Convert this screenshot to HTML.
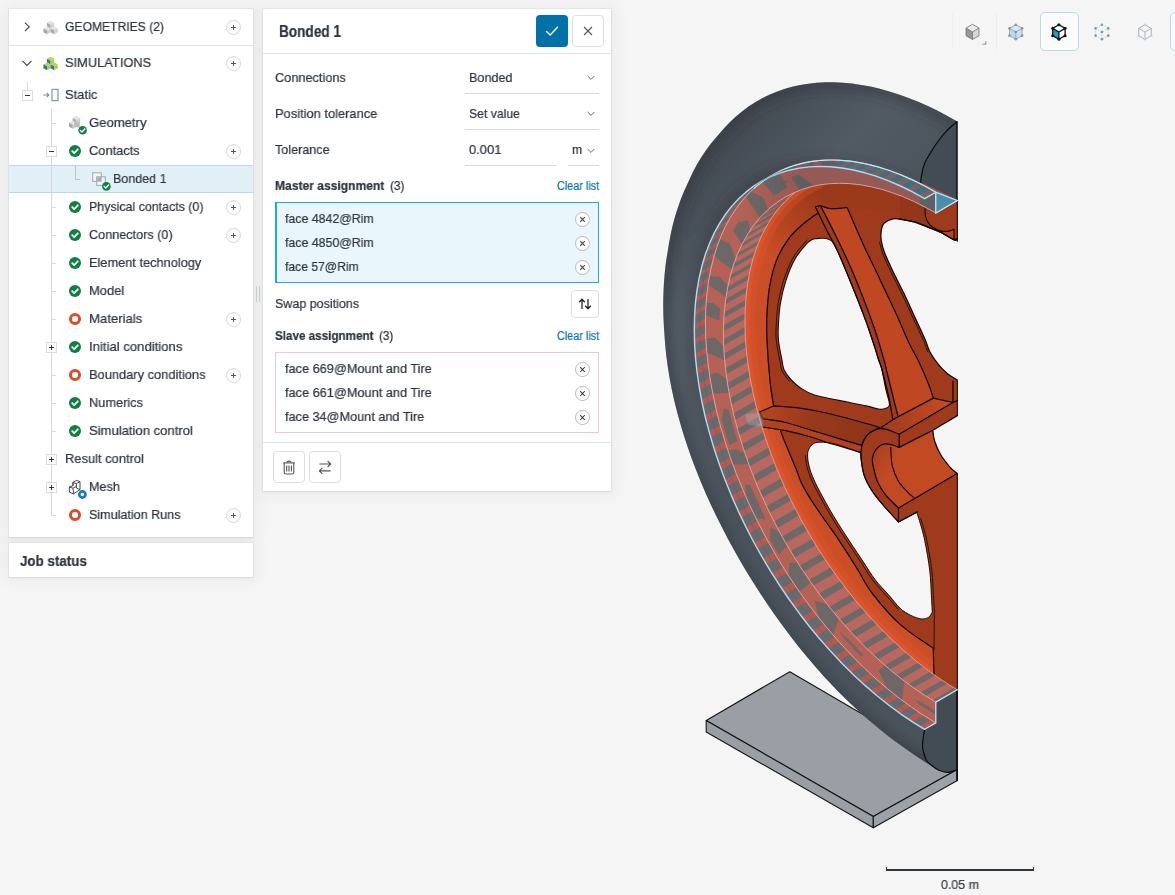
<!DOCTYPE html>
<html lang="en">
<head>
<meta charset="utf-8">
<title>SimScale Workbench - Bonded 1</title>
<style>
html,body{margin:0;padding:0;}
body{width:1175px;height:895px;overflow:hidden;background:#f5f5f5;font-family:"Liberation Sans",sans-serif;position:relative;}
.t{position:absolute;white-space:pre;line-height:1;transform-origin:0 50%;display:block;will-change:transform;-webkit-text-stroke:0.22px currentColor;}
.abs{position:absolute;}
.card{position:absolute;background:#fff;}
.sh{position:absolute;background:#fff;box-shadow:0 0 0 1px rgba(0,0,0,0.035),0 0 16px 4px rgba(0,0,0,0.045),0 1px 2px rgba(0,0,0,0.06);}
.plus{position:absolute;width:13px;height:13px;border:1px solid #d6d6d6;border-radius:50%;background:#fff;}
.plus:before{content:"";position:absolute;left:4px;top:6px;width:5px;height:1px;background:#555;}
.plus:after{content:"";position:absolute;left:6px;top:4px;width:1px;height:5px;background:#555;}
.ok{position:absolute;width:12px;height:12px;border-radius:50%;background:#0f8042;}
.ok svg{position:absolute;left:0;top:0;}
.ring{position:absolute;width:5.6px;height:5.6px;border:3px solid #dc4d2c;border-radius:50%;}
.exp{position:absolute;width:9px;height:9px;border:1px solid #dcdcdc;background:#fff;}
.exp:before{content:"";position:absolute;left:2px;top:4px;width:5px;height:1px;background:#333;}
.exp.p:after{content:"";position:absolute;left:4px;top:2px;width:1px;height:5px;background:#333;}
.hl{position:absolute;height:1px;background:#dadada;}
.vl{position:absolute;width:1px;background:#dadada;}
.btn{position:absolute;width:30px;height:30px;border:1px solid #dedede;border-radius:4px;background:#fff;}
.xc{position:absolute;width:13px;height:13px;border:1px solid #b9b9b9;border-radius:50%;background:#fff;}
.xc svg{position:absolute;left:0;top:0;}
.ul{position:absolute;height:1px;background:#d9d9d9;}
</style>
</head>
<body>
<div class="sh" style="left:9px;top:9px;width:244px;height:528px;"></div>
<div class="sh" style="left:9px;top:543px;width:244px;height:34px;"></div>
<div class="sh" style="left:263px;top:9px;width:348px;height:482px;"></div>
<svg class="abs" style="left:0;top:0" width="1175" height="895" viewBox="0 0 1175 895">
<defs>
<linearGradient id="gt" gradientUnits="userSpaceOnUse" x1="680" y1="120" x2="900" y2="330"><stop offset="0" stop-color="#3b424a"/><stop offset="0.45" stop-color="#525a63"/><stop offset="1" stop-color="#444c54"/></linearGradient>
<pattern id="stripes" patternUnits="userSpaceOnUse" width="40" height="19" patternTransform="rotate(-28)"><rect x="0" y="0" width="40" height="8" fill="#6b6a6c"/></pattern>
</defs>
<polygon points="706.2,720.5 789.8,671.7 957.3,769.5 873.3,816.4" fill="#9a9fa5" stroke="#141414" stroke-width="1.1" stroke-linejoin="round"/>
<polygon points="706.2,720.5 873.3,816.4 873.3,827.8 706.2,732.0" fill="#9a9fa6" stroke="#141414" stroke-width="1.1" stroke-linejoin="round"/>
<polygon points="873.3,816.4 957.3,769.5 957.3,780.6 873.3,827.8" fill="#9da2a8" stroke="#141414" stroke-width="1.1" stroke-linejoin="round"/>
<clipPath id="ctire"><polygon points="672.7,225.2 670.6,234.7 670.6,234.7 670.6,234.7 668.8,244.4 668.8,244.4 667.3,253.9 667.3,253.9 665.8,263.6 665.8,263.6 665.8,263.6 664.7,273.6 664.7,273.6 664.7,273.6 663.9,283.8 663.9,283.8 663.9,283.8 663.4,294.3 663.4,294.3 663.4,294.3 663.2,304.9 663.2,304.9 663.2,304.9 663.4,315.7 663.4,315.7 663.4,315.7 663.9,326.7 663.9,326.7 663.9,326.7 664.7,337.9 664.7,337.9 664.7,337.9 665.1,343.9 665.1,343.9 666.2,355.0 666.2,355.0 666.2,355.0 667.7,366.2 667.7,366.2 667.7,366.2 669.5,377.5 669.5,377.5 669.5,377.5 671.7,388.9 671.7,388.9 671.7,388.9 674.2,400.4 674.2,400.4 674.2,400.4 677.1,411.9 677.1,411.9 677.1,411.9 680.3,423.5 680.3,423.5 680.3,423.5 683.8,435.2 683.8,435.2 683.8,435.2 687.6,446.8 687.6,446.8 687.6,446.8 691.7,458.5 691.7,458.5 691.7,458.5 696.1,470.1 696.1,470.1 696.1,470.1 700.8,481.7 700.8,481.7 700.8,481.7 705.7,493.3 705.7,493.3 705.7,493.3 710.9,504.8 710.9,504.8 710.9,504.8 716.4,516.2 716.4,516.2 716.4,516.2 722.1,527.6 722.1,527.6 722.1,527.6 728.0,538.9 728.0,538.9 728.0,538.9 734.1,550.1 734.1,550.1 734.1,550.1 740.4,561.2 740.4,561.2 740.4,561.2 746.9,572.2 746.9,572.2 746.9,572.2 753.6,583.0 753.6,583.0 753.6,583.0 760.5,593.8 760.5,593.8 760.5,593.8 767.5,604.3 767.5,604.3 767.5,604.3 774.7,614.8 774.7,614.8 774.7,614.8 782.1,625.0 782.1,625.0 782.1,625.0 789.6,635.1 789.6,635.1 790.9,636.8 790.9,636.8 798.8,647.0 798.8,647.0 798.8,647.0 806.9,656.8 806.9,656.8 806.9,656.8 815.2,666.5 815.2,666.5 815.2,666.5 823.5,675.9 823.5,675.9 823.5,675.9 832.0,685.0 832.0,685.0 832.0,685.0 840.7,693.9 840.7,693.9 840.7,693.9 849.4,702.4 849.4,702.4 849.4,702.4 858.2,710.7 858.2,710.7 858.2,710.7 867.2,718.7 867.2,718.7 867.2,718.7 876.2,726.3 876.2,726.3 876.2,726.3 885.2,733.7 885.2,733.7 885.2,733.7 894.4,740.7 894.4,740.7 894.4,740.7 903.5,747.3 903.5,747.3 910.2,751.9 910.2,751.9 919.7,758.4 919.7,758.4 919.7,758.4 929.2,764.6 929.2,764.6 929.2,764.6 938.7,770.3 938.7,770.3 938.7,770.3 938.7,770.3 938.7,770.3 938.7,770.3 938.7,770.3 938.7,770.3 938.7,770.3 938.7,770.3 938.7,770.3 938.7,770.3 938.7,770.3 938.7,770.3 938.7,770.3 938.7,770.3 938.7,770.3 938.7,770.3 938.7,770.3 947.7,772.4 947.7,772.4 947.7,772.4 947.7,772.4 947.7,772.4 947.7,772.4 947.7,772.4 947.7,772.4 947.7,772.4 947.7,772.4 947.7,772.4 947.7,772.4 947.7,772.4 947.7,772.4 947.8,772.4 947.8,772.4 947.8,772.4 947.8,772.4 947.8,772.4 947.8,772.4 947.8,772.4 947.8,772.4 947.8,772.4 947.8,772.4 947.8,772.4 947.8,772.4 947.8,772.4 947.8,772.4 947.8,772.4 947.8,772.4 947.8,772.4 957.3,769.5 957.3,769.5 957.3,769.5 957.3,769.5 957.3,769.5 957.3,769.5 957.3,769.5 957.3,769.5 957.3,769.5 957.3,769.5 957.3,769.5 957.3,769.5 957.3,769.5 957.3,769.5 957.3,769.5 957.3,769.5 957.3,769.5 957.3,769.5 957.3,769.5 957.3,769.5 957.3,769.5 957.3,769.5 957.3,769.5 957.3,769.5 957.3,769.5 957.3,769.5 957.3,769.5 957.3,769.5 957.3,769.5 957.3,769.5 957.3,769.5 957.3,769.5 957.3,769.5 957.3,769.5 957.3,769.5 957.3,769.5 957.3,769.5 957.3,769.5 957.3,769.5 957.3,769.5 957.3,769.5 957.3,769.5 957.3,769.5 957.3,769.5 957.3,769.5 957.3,769.5 957.3,769.5 957.3,769.5 957.3,769.5 957.3,769.5 957.3,689.7 957.3,689.7 957.3,689.7 957.3,689.7 957.3,689.7 957.3,689.7 957.3,689.7 957.3,689.7 957.3,689.7 957.3,689.7 957.3,689.7 957.3,689.7 957.3,689.7 957.3,689.7 957.3,689.7 957.3,689.7 957.2,689.7 957.2,689.7 957.2,689.7 957.2,689.7 957.2,689.7 957.2,689.7 935.7,702.1 935.7,702.1 935.7,702.1 935.7,702.1 935.7,702.1 935.7,702.1 935.7,702.1 935.7,702.1 935.7,702.1 935.7,702.1 935.7,702.1 935.7,702.1 935.7,722.9 924.6,729.2 916.6,724.3 908.6,719.2 900.6,713.7 892.6,707.9 884.6,701.8 876.8,695.4 868.9,688.8 861.2,681.8 853.5,674.7 845.9,667.2 838.4,659.5 831.0,651.6 823.7,643.4 816.5,635.0 809.5,626.4 802.6,617.6 795.9,608.6 789.3,599.5 782.9,590.2 776.6,580.7 770.6,571.1 764.7,561.3 759.0,551.5 753.5,541.5 748.2,531.4 743.2,521.3 738.3,511.0 733.7,500.8 729.4,490.4 725.2,480.1 721.3,469.7 717.7,459.3 714.3,449.0 711.1,438.6 708.3,428.3 705.6,418.0 703.3,407.8 701.2,397.6 699.4,387.5 697.9,377.5 696.6,367.7 695.6,357.9 694.9,348.3 694.5,338.8 694.4,329.4 694.5,320.3 694.9,311.3 695.6,302.4 696.6,293.8 697.9,285.4 699.4,277.2 701.2,269.3 703.3,261.5 705.6,254.0 708.3,246.8 711.1,239.9 714.3,233.2 717.7,226.8 721.3,220.7 725.2,214.8 729.4,209.3 733.7,204.1 738.3,199.2 743.2,194.6 748.2,190.4 753.5,186.5 759.0,182.9 764.7,179.7 770.5,176.8 776.6,174.3 782.8,172.1 789.3,170.3 795.8,168.8 802.6,167.7 809.5,167.0 816.5,166.6 823.7,166.6 830.9,166.9 838.3,167.6 845.8,168.7 853.4,170.1 861.1,171.9 868.9,174.0 876.7,176.5 884.6,179.4 892.5,182.5 900.5,186.1 908.5,189.9 916.5,194.2 924.6,198.7 924.6,198.7 924.6,198.7 924.6,198.7 924.6,198.7 924.6,198.7 924.6,198.7 924.6,198.7 924.6,198.7 924.6,198.7 924.6,198.7 924.6,198.7 924.6,198.7 924.6,198.7 924.6,198.7 924.6,198.7 924.6,198.7 924.6,198.7 924.6,198.7 924.6,198.7 924.6,198.7 924.6,198.7 924.6,198.7 924.6,198.7 924.6,198.7 924.6,198.7 924.6,198.7 924.6,198.7 924.6,198.7 924.6,198.7 924.6,198.7 924.6,198.7 924.6,198.7 924.6,198.7 924.6,198.7 924.6,198.7 924.6,198.7 924.6,198.7 924.6,198.7 924.6,198.7 924.6,198.7 924.6,198.7 924.6,198.7 935.8,192.2 957.2,200.5 957.2,200.5 957.2,200.5 957.2,200.5 957.3,200.5 957.3,200.5 957.3,200.5 957.3,200.5 957.3,200.5 957.3,200.5 957.3,200.5 957.3,200.5 957.3,200.5 957.3,200.5 957.3,200.5 957.3,200.5 957.3,200.5 957.3,200.5 957.3,200.5 957.3,200.5 957.3,200.5 957.3,121.5 957.3,121.5 957.3,121.5 957.3,121.5 957.3,121.5 957.3,121.5 957.3,121.5 957.3,121.5 957.3,121.5 957.3,121.5 957.3,121.5 957.3,121.5 957.3,121.5 957.3,121.5 957.3,121.5 957.3,121.5 957.3,121.5 957.3,121.5 957.3,121.5 957.3,121.5 957.3,121.5 957.3,121.5 957.3,121.5 957.3,121.5 957.3,121.5 957.3,121.5 957.3,121.5 957.3,121.5 957.3,121.5 957.3,121.5 957.3,121.5 957.3,121.5 957.3,121.5 957.3,121.5 957.3,121.5 957.3,121.5 957.3,121.5 957.3,121.5 957.3,121.5 957.3,121.5 957.3,121.5 957.3,121.5 957.3,121.5 947.5,115.9 947.5,115.9 947.5,115.9 937.7,110.8 937.7,110.8 937.7,110.8 927.9,106.1 927.9,106.1 927.9,106.1 918.2,101.8 918.2,101.8 918.2,101.8 908.5,97.9 908.5,97.9 908.5,97.9 898.9,94.4 898.9,94.4 898.9,94.4 889.3,91.4 889.3,91.4 889.3,91.4 879.8,88.8 879.8,88.8 879.8,88.8 870.5,86.6 870.5,86.6 870.5,86.6 861.2,84.9 861.2,84.9 861.2,84.9 852.0,83.6 852.0,83.6 852.0,83.6 843.0,82.7 843.0,82.7 843.0,82.7 834.1,82.3 834.1,82.3 834.1,82.3 825.4,82.3 825.4,82.3 825.4,82.3 816.8,82.8 816.8,82.8 816.8,82.8 808.4,83.7 808.4,83.7 808.4,83.7 800.2,85.0 800.2,85.0 800.2,85.0 792.1,86.8 792.1,86.8 792.1,86.8 784.3,89.0 784.3,89.0 784.3,89.0 776.7,91.7 776.7,91.7 776.7,91.7 769.3,94.8 769.3,94.8 769.3,94.8 762.1,98.3 762.1,98.3 762.1,98.3 755.2,102.2 755.2,102.2 755.2,102.2 748.5,106.6 748.5,106.6 748.5,106.6 742.0,111.4 742.0,111.4 742.0,111.4 735.9,116.5 735.9,116.5 735.9,116.6 730.0,122.1 730.0,122.1 730.0,122.1 724.3,128.1 724.3,128.1 716.3,137.2 716.3,137.2 711.0,143.5 711.0,143.5 711.0,143.5 706.0,150.2 706.0,150.2 706.0,150.2 701.3,157.2 701.3,157.2 701.3,157.2 696.9,164.6 696.9,164.6 696.9,164.6 692.8,172.3 692.8,172.3 692.8,172.3 689.0,180.4 689.0,180.4 684.5,190.3 684.5,190.3 681.1,198.6 681.1,198.6 681.1,198.6 678.0,207.2 678.0,207.2 678.0,207.2 675.2,216.1 675.2,216.1 675.2,216.1 672.7,225.2 672.7,225.2 672.7,225.2"/></clipPath>
<polygon points="672.7,225.2 670.6,234.7 670.6,234.7 670.6,234.7 668.8,244.4 668.8,244.4 667.3,253.9 667.3,253.9 665.8,263.6 665.8,263.6 665.8,263.6 664.7,273.6 664.7,273.6 664.7,273.6 663.9,283.8 663.9,283.8 663.9,283.8 663.4,294.3 663.4,294.3 663.4,294.3 663.2,304.9 663.2,304.9 663.2,304.9 663.4,315.7 663.4,315.7 663.4,315.7 663.9,326.7 663.9,326.7 663.9,326.7 664.7,337.9 664.7,337.9 664.7,337.9 665.1,343.9 665.1,343.9 666.2,355.0 666.2,355.0 666.2,355.0 667.7,366.2 667.7,366.2 667.7,366.2 669.5,377.5 669.5,377.5 669.5,377.5 671.7,388.9 671.7,388.9 671.7,388.9 674.2,400.4 674.2,400.4 674.2,400.4 677.1,411.9 677.1,411.9 677.1,411.9 680.3,423.5 680.3,423.5 680.3,423.5 683.8,435.2 683.8,435.2 683.8,435.2 687.6,446.8 687.6,446.8 687.6,446.8 691.7,458.5 691.7,458.5 691.7,458.5 696.1,470.1 696.1,470.1 696.1,470.1 700.8,481.7 700.8,481.7 700.8,481.7 705.7,493.3 705.7,493.3 705.7,493.3 710.9,504.8 710.9,504.8 710.9,504.8 716.4,516.2 716.4,516.2 716.4,516.2 722.1,527.6 722.1,527.6 722.1,527.6 728.0,538.9 728.0,538.9 728.0,538.9 734.1,550.1 734.1,550.1 734.1,550.1 740.4,561.2 740.4,561.2 740.4,561.2 746.9,572.2 746.9,572.2 746.9,572.2 753.6,583.0 753.6,583.0 753.6,583.0 760.5,593.8 760.5,593.8 760.5,593.8 767.5,604.3 767.5,604.3 767.5,604.3 774.7,614.8 774.7,614.8 774.7,614.8 782.1,625.0 782.1,625.0 782.1,625.0 789.6,635.1 789.6,635.1 790.9,636.8 790.9,636.8 798.8,647.0 798.8,647.0 798.8,647.0 806.9,656.8 806.9,656.8 806.9,656.8 815.2,666.5 815.2,666.5 815.2,666.5 823.5,675.9 823.5,675.9 823.5,675.9 832.0,685.0 832.0,685.0 832.0,685.0 840.7,693.9 840.7,693.9 840.7,693.9 849.4,702.4 849.4,702.4 849.4,702.4 858.2,710.7 858.2,710.7 858.2,710.7 867.2,718.7 867.2,718.7 867.2,718.7 876.2,726.3 876.2,726.3 876.2,726.3 885.2,733.7 885.2,733.7 885.2,733.7 894.4,740.7 894.4,740.7 894.4,740.7 903.5,747.3 903.5,747.3 910.2,751.9 910.2,751.9 919.7,758.4 919.7,758.4 919.7,758.4 929.2,764.6 929.2,764.6 929.2,764.6 938.7,770.3 938.7,770.3 938.7,770.3 938.7,770.3 938.7,770.3 938.7,770.3 938.7,770.3 938.7,770.3 938.7,770.3 938.7,770.3 938.7,770.3 938.7,770.3 938.7,770.3 938.7,770.3 938.7,770.3 938.7,770.3 938.7,770.3 938.7,770.3 938.7,770.3 947.7,772.4 947.7,772.4 947.7,772.4 947.7,772.4 947.7,772.4 947.7,772.4 947.7,772.4 947.7,772.4 947.7,772.4 947.7,772.4 947.7,772.4 947.7,772.4 947.7,772.4 947.7,772.4 947.8,772.4 947.8,772.4 947.8,772.4 947.8,772.4 947.8,772.4 947.8,772.4 947.8,772.4 947.8,772.4 947.8,772.4 947.8,772.4 947.8,772.4 947.8,772.4 947.8,772.4 947.8,772.4 947.8,772.4 947.8,772.4 947.8,772.4 957.3,769.5 957.3,769.5 957.3,769.5 957.3,769.5 957.3,769.5 957.3,769.5 957.3,769.5 957.3,769.5 957.3,769.5 957.3,769.5 957.3,769.5 957.3,769.5 957.3,769.5 957.3,769.5 957.3,769.5 957.3,769.5 957.3,769.5 957.3,769.5 957.3,769.5 957.3,769.5 957.3,769.5 957.3,769.5 957.3,769.5 957.3,769.5 957.3,769.5 957.3,769.5 957.3,769.5 957.3,769.5 957.3,769.5 957.3,769.5 957.3,769.5 957.3,769.5 957.3,769.5 957.3,769.5 957.3,769.5 957.3,769.5 957.3,769.5 957.3,769.5 957.3,769.5 957.3,769.5 957.3,769.5 957.3,769.5 957.3,769.5 957.3,769.5 957.3,769.5 957.3,769.5 957.3,769.5 957.3,769.5 957.3,769.5 957.3,769.5 957.3,689.7 957.3,689.7 957.3,689.7 957.3,689.7 957.3,689.7 957.3,689.7 957.3,689.7 957.3,689.7 957.3,689.7 957.3,689.7 957.3,689.7 957.3,689.7 957.3,689.7 957.3,689.7 957.3,689.7 957.3,689.7 957.2,689.7 957.2,689.7 957.2,689.7 957.2,689.7 957.2,689.7 957.2,689.7 935.7,702.1 935.7,702.1 935.7,702.1 935.7,702.1 935.7,702.1 935.7,702.1 935.7,702.1 935.7,702.1 935.7,702.1 935.7,702.1 935.7,702.1 935.7,702.1 935.7,722.9 924.6,729.2 916.6,724.3 908.6,719.2 900.6,713.7 892.6,707.9 884.6,701.8 876.8,695.4 868.9,688.8 861.2,681.8 853.5,674.7 845.9,667.2 838.4,659.5 831.0,651.6 823.7,643.4 816.5,635.0 809.5,626.4 802.6,617.6 795.9,608.6 789.3,599.5 782.9,590.2 776.6,580.7 770.6,571.1 764.7,561.3 759.0,551.5 753.5,541.5 748.2,531.4 743.2,521.3 738.3,511.0 733.7,500.8 729.4,490.4 725.2,480.1 721.3,469.7 717.7,459.3 714.3,449.0 711.1,438.6 708.3,428.3 705.6,418.0 703.3,407.8 701.2,397.6 699.4,387.5 697.9,377.5 696.6,367.7 695.6,357.9 694.9,348.3 694.5,338.8 694.4,329.4 694.5,320.3 694.9,311.3 695.6,302.4 696.6,293.8 697.9,285.4 699.4,277.2 701.2,269.3 703.3,261.5 705.6,254.0 708.3,246.8 711.1,239.9 714.3,233.2 717.7,226.8 721.3,220.7 725.2,214.8 729.4,209.3 733.7,204.1 738.3,199.2 743.2,194.6 748.2,190.4 753.5,186.5 759.0,182.9 764.7,179.7 770.5,176.8 776.6,174.3 782.8,172.1 789.3,170.3 795.8,168.8 802.6,167.7 809.5,167.0 816.5,166.6 823.7,166.6 830.9,166.9 838.3,167.6 845.8,168.7 853.4,170.1 861.1,171.9 868.9,174.0 876.7,176.5 884.6,179.4 892.5,182.5 900.5,186.1 908.5,189.9 916.5,194.2 924.6,198.7 924.6,198.7 924.6,198.7 924.6,198.7 924.6,198.7 924.6,198.7 924.6,198.7 924.6,198.7 924.6,198.7 924.6,198.7 924.6,198.7 924.6,198.7 924.6,198.7 924.6,198.7 924.6,198.7 924.6,198.7 924.6,198.7 924.6,198.7 924.6,198.7 924.6,198.7 924.6,198.7 924.6,198.7 924.6,198.7 924.6,198.7 924.6,198.7 924.6,198.7 924.6,198.7 924.6,198.7 924.6,198.7 924.6,198.7 924.6,198.7 924.6,198.7 924.6,198.7 924.6,198.7 924.6,198.7 924.6,198.7 924.6,198.7 924.6,198.7 924.6,198.7 924.6,198.7 924.6,198.7 924.6,198.7 924.6,198.7 935.8,192.2 957.2,200.5 957.2,200.5 957.2,200.5 957.2,200.5 957.3,200.5 957.3,200.5 957.3,200.5 957.3,200.5 957.3,200.5 957.3,200.5 957.3,200.5 957.3,200.5 957.3,200.5 957.3,200.5 957.3,200.5 957.3,200.5 957.3,200.5 957.3,200.5 957.3,200.5 957.3,200.5 957.3,200.5 957.3,121.5 957.3,121.5 957.3,121.5 957.3,121.5 957.3,121.5 957.3,121.5 957.3,121.5 957.3,121.5 957.3,121.5 957.3,121.5 957.3,121.5 957.3,121.5 957.3,121.5 957.3,121.5 957.3,121.5 957.3,121.5 957.3,121.5 957.3,121.5 957.3,121.5 957.3,121.5 957.3,121.5 957.3,121.5 957.3,121.5 957.3,121.5 957.3,121.5 957.3,121.5 957.3,121.5 957.3,121.5 957.3,121.5 957.3,121.5 957.3,121.5 957.3,121.5 957.3,121.5 957.3,121.5 957.3,121.5 957.3,121.5 957.3,121.5 957.3,121.5 957.3,121.5 957.3,121.5 957.3,121.5 957.3,121.5 957.3,121.5 947.5,115.9 947.5,115.9 947.5,115.9 937.7,110.8 937.7,110.8 937.7,110.8 927.9,106.1 927.9,106.1 927.9,106.1 918.2,101.8 918.2,101.8 918.2,101.8 908.5,97.9 908.5,97.9 908.5,97.9 898.9,94.4 898.9,94.4 898.9,94.4 889.3,91.4 889.3,91.4 889.3,91.4 879.8,88.8 879.8,88.8 879.8,88.8 870.5,86.6 870.5,86.6 870.5,86.6 861.2,84.9 861.2,84.9 861.2,84.9 852.0,83.6 852.0,83.6 852.0,83.6 843.0,82.7 843.0,82.7 843.0,82.7 834.1,82.3 834.1,82.3 834.1,82.3 825.4,82.3 825.4,82.3 825.4,82.3 816.8,82.8 816.8,82.8 816.8,82.8 808.4,83.7 808.4,83.7 808.4,83.7 800.2,85.0 800.2,85.0 800.2,85.0 792.1,86.8 792.1,86.8 792.1,86.8 784.3,89.0 784.3,89.0 784.3,89.0 776.7,91.7 776.7,91.7 776.7,91.7 769.3,94.8 769.3,94.8 769.3,94.8 762.1,98.3 762.1,98.3 762.1,98.3 755.2,102.2 755.2,102.2 755.2,102.2 748.5,106.6 748.5,106.6 748.5,106.6 742.0,111.4 742.0,111.4 742.0,111.4 735.9,116.5 735.9,116.5 735.9,116.6 730.0,122.1 730.0,122.1 730.0,122.1 724.3,128.1 724.3,128.1 716.3,137.2 716.3,137.2 711.0,143.5 711.0,143.5 711.0,143.5 706.0,150.2 706.0,150.2 706.0,150.2 701.3,157.2 701.3,157.2 701.3,157.2 696.9,164.6 696.9,164.6 696.9,164.6 692.8,172.3 692.8,172.3 692.8,172.3 689.0,180.4 689.0,180.4 684.5,190.3 684.5,190.3 681.1,198.6 681.1,198.6 681.1,198.6 678.0,207.2 678.0,207.2 678.0,207.2 675.2,216.1 675.2,216.1 675.2,216.1 672.7,225.2 672.7,225.2 672.7,225.2" fill="url(#gt)" stroke="none" stroke-width="0" />
<filter id="bl" x="-10%" y="-10%" width="120%" height="120%"><feGaussianBlur stdDeviation="4"/></filter>
<g clip-path="url(#ctire)"><g filter="url(#bl)">
<polyline points="672.7,225.2 670.6,234.7 670.6,234.7 670.6,234.7 668.8,244.4 668.8,244.4 667.3,253.9 667.3,253.9 665.8,263.6 665.8,263.6 665.8,263.6 664.7,273.6 664.7,273.6 664.7,273.6 663.9,283.8 663.9,283.8 663.9,283.8 663.4,294.3 663.4,294.3 663.4,294.3 663.2,304.9 663.2,304.9 663.2,304.9 663.4,315.7 663.4,315.7 663.4,315.7 663.9,326.7 663.9,326.7 663.9,326.7 664.7,337.9 664.7,337.9 664.7,337.9 665.1,343.9 665.1,343.9 666.2,355.0 666.2,355.0 666.2,355.0 667.7,366.2 667.7,366.2 667.7,366.2 669.5,377.5 669.5,377.5 669.5,377.5 671.7,388.9 671.7,388.9 671.7,388.9 674.2,400.4 674.2,400.4 674.2,400.4 677.1,411.9 677.1,411.9 677.1,411.9 680.3,423.5 680.3,423.5 680.3,423.5 683.8,435.2 683.8,435.2 683.8,435.2 687.6,446.8 687.6,446.8 687.6,446.8 691.7,458.5 691.7,458.5 691.7,458.5 696.1,470.1 696.1,470.1 696.1,470.1 700.8,481.7 700.8,481.7 700.8,481.7 705.7,493.3 705.7,493.3 705.7,493.3 710.9,504.8 710.9,504.8 710.9,504.8 716.4,516.2 716.4,516.2 716.4,516.2 722.1,527.6 722.1,527.6 722.1,527.6 728.0,538.9 728.0,538.9 728.0,538.9 734.1,550.1 734.1,550.1 734.1,550.1 740.4,561.2 740.4,561.2 740.4,561.2 746.9,572.2 746.9,572.2 746.9,572.2 753.6,583.0 753.6,583.0 753.6,583.0 760.5,593.8 760.5,593.8 760.5,593.8 767.5,604.3 767.5,604.3 767.5,604.3 774.7,614.8 774.7,614.8 774.7,614.8 782.1,625.0 782.1,625.0 782.1,625.0 789.6,635.1 789.6,635.1 790.9,636.8 790.9,636.8 798.8,647.0 798.8,647.0 798.8,647.0 806.9,656.8 806.9,656.8 806.9,656.8 815.2,666.5 815.2,666.5 815.2,666.5 823.5,675.9 823.5,675.9 823.5,675.9 832.0,685.0 832.0,685.0 832.0,685.0 840.7,693.9 840.7,693.9 840.7,693.9 849.4,702.4 849.4,702.4 849.4,702.4 858.2,710.7 858.2,710.7 858.2,710.7 867.2,718.7 867.2,718.7 867.2,718.7 876.2,726.3 876.2,726.3 876.2,726.3 885.2,733.7 885.2,733.7 885.2,733.7 894.4,740.7 894.4,740.7 894.4,740.7 903.5,747.3 903.5,747.3 910.2,751.9 910.2,751.9 919.7,758.4 919.7,758.4 919.7,758.4 929.2,764.6 929.2,764.6 929.2,764.6 938.7,770.3 938.7,770.3 938.7,770.3 938.7,770.3 938.7,770.3 938.7,770.3 938.7,770.3 938.7,770.3 938.7,770.3 938.7,770.3 938.7,770.3 938.7,770.3 938.7,770.3 938.7,770.3 938.7,770.3 938.7,770.3 938.7,770.3 938.7,770.3 938.7,770.3 947.7,772.4 947.7,772.4 947.7,772.4 947.7,772.4 947.7,772.4 947.7,772.4 947.7,772.4 947.7,772.4 947.7,772.4 947.7,772.4 947.7,772.4 947.7,772.4 947.7,772.4 947.7,772.4 947.8,772.4 947.8,772.4 947.8,772.4 947.8,772.4 947.8,772.4 947.8,772.4 947.8,772.4 947.8,772.4 947.8,772.4 947.8,772.4 947.8,772.4 947.8,772.4 947.8,772.4 947.8,772.4 947.8,772.4 947.8,772.4 947.8,772.4 957.3,769.5 957.3,769.5 957.3,769.5 957.3,769.5 957.3,769.5 957.3,769.5 957.3,769.5 957.3,769.5 957.3,769.5 957.3,769.5 957.3,769.5 957.3,769.5 957.3,769.5 957.3,769.5 957.3,769.5 957.3,769.5 957.3,769.5 957.3,769.5 957.3,769.5 957.3,769.5 957.3,769.5 957.3,769.5 957.3,769.5 957.3,769.5 957.3,769.5 957.3,769.5 957.3,769.5 957.3,769.5 957.3,769.5 957.3,769.5 957.3,769.5 957.3,769.5 957.3,769.5 957.3,769.5 957.3,769.5 957.3,769.5 957.3,769.5 957.3,769.5 957.3,769.5 957.3,769.5 957.3,769.5 957.3,769.5 957.3,769.5 957.3,769.5 957.3,769.5 957.3,769.5 957.3,769.5 957.3,769.5 957.3,769.5 957.3,769.5 957.3,689.7 957.3,689.7 957.3,689.7 957.3,689.7 957.3,689.7 957.3,689.7 957.3,689.7 957.3,689.7 957.3,689.7 957.3,689.7 957.3,689.7 957.3,689.7 957.3,689.7 957.3,689.7 957.3,689.7 957.3,689.7 957.2,689.7 957.2,689.7 957.2,689.7 957.2,689.7 957.2,689.7 957.2,689.7 935.7,702.1 935.7,702.1 935.7,702.1 935.7,702.1 935.7,702.1 935.7,702.1 935.7,702.1 935.7,702.1 935.7,702.1 935.7,702.1 935.7,702.1 935.7,702.1 935.7,722.9 924.6,729.2 916.6,724.3 908.6,719.2 900.6,713.7 892.6,707.9 884.6,701.8 876.8,695.4 868.9,688.8 861.2,681.8 853.5,674.7 845.9,667.2 838.4,659.5 831.0,651.6 823.7,643.4 816.5,635.0 809.5,626.4 802.6,617.6 795.9,608.6 789.3,599.5 782.9,590.2 776.6,580.7 770.6,571.1 764.7,561.3 759.0,551.5 753.5,541.5 748.2,531.4 743.2,521.3 738.3,511.0 733.7,500.8 729.4,490.4 725.2,480.1 721.3,469.7 717.7,459.3 714.3,449.0 711.1,438.6 708.3,428.3 705.6,418.0 703.3,407.8 701.2,397.6 699.4,387.5 697.9,377.5 696.6,367.7 695.6,357.9 694.9,348.3 694.5,338.8 694.4,329.4 694.5,320.3 694.9,311.3 695.6,302.4 696.6,293.8 697.9,285.4 699.4,277.2 701.2,269.3 703.3,261.5 705.6,254.0 708.3,246.8 711.1,239.9 714.3,233.2 717.7,226.8 721.3,220.7 725.2,214.8 729.4,209.3 733.7,204.1 738.3,199.2 743.2,194.6 748.2,190.4 753.5,186.5 759.0,182.9 764.7,179.7 770.5,176.8 776.6,174.3 782.8,172.1 789.3,170.3 795.8,168.8 802.6,167.7 809.5,167.0 816.5,166.6 823.7,166.6 830.9,166.9 838.3,167.6 845.8,168.7 853.4,170.1 861.1,171.9 868.9,174.0 876.7,176.5 884.6,179.4 892.5,182.5 900.5,186.1 908.5,189.9 916.5,194.2 924.6,198.7 924.6,198.7 924.6,198.7 924.6,198.7 924.6,198.7 924.6,198.7 924.6,198.7 924.6,198.7 924.6,198.7 924.6,198.7 924.6,198.7 924.6,198.7 924.6,198.7 924.6,198.7 924.6,198.7 924.6,198.7 924.6,198.7 924.6,198.7 924.6,198.7 924.6,198.7 924.6,198.7 924.6,198.7 924.6,198.7 924.6,198.7 924.6,198.7 924.6,198.7 924.6,198.7 924.6,198.7 924.6,198.7 924.6,198.7 924.6,198.7 924.6,198.7 924.6,198.7 924.6,198.7 924.6,198.7 924.6,198.7 924.6,198.7 924.6,198.7 924.6,198.7 924.6,198.7 924.6,198.7 924.6,198.7 924.6,198.7 935.8,192.2 957.2,200.5 957.2,200.5 957.2,200.5 957.2,200.5 957.3,200.5 957.3,200.5 957.3,200.5 957.3,200.5 957.3,200.5 957.3,200.5 957.3,200.5 957.3,200.5 957.3,200.5 957.3,200.5 957.3,200.5 957.3,200.5 957.3,200.5 957.3,200.5 957.3,200.5 957.3,200.5 957.3,200.5 957.3,121.5 957.3,121.5 957.3,121.5 957.3,121.5 957.3,121.5 957.3,121.5 957.3,121.5 957.3,121.5 957.3,121.5 957.3,121.5 957.3,121.5 957.3,121.5 957.3,121.5 957.3,121.5 957.3,121.5 957.3,121.5 957.3,121.5 957.3,121.5 957.3,121.5 957.3,121.5 957.3,121.5 957.3,121.5 957.3,121.5 957.3,121.5 957.3,121.5 957.3,121.5 957.3,121.5 957.3,121.5 957.3,121.5 957.3,121.5 957.3,121.5 957.3,121.5 957.3,121.5 957.3,121.5 957.3,121.5 957.3,121.5 957.3,121.5 957.3,121.5 957.3,121.5 957.3,121.5 957.3,121.5 957.3,121.5 957.3,121.5 947.5,115.9 947.5,115.9 947.5,115.9 937.7,110.8 937.7,110.8 937.7,110.8 927.9,106.1 927.9,106.1 927.9,106.1 918.2,101.8 918.2,101.8 918.2,101.8 908.5,97.9 908.5,97.9 908.5,97.9 898.9,94.4 898.9,94.4 898.9,94.4 889.3,91.4 889.3,91.4 889.3,91.4 879.8,88.8 879.8,88.8 879.8,88.8 870.5,86.6 870.5,86.6 870.5,86.6 861.2,84.9 861.2,84.9 861.2,84.9 852.0,83.6 852.0,83.6 852.0,83.6 843.0,82.7 843.0,82.7 843.0,82.7 834.1,82.3 834.1,82.3 834.1,82.3 825.4,82.3 825.4,82.3 825.4,82.3 816.8,82.8 816.8,82.8 816.8,82.8 808.4,83.7 808.4,83.7 808.4,83.7 800.2,85.0 800.2,85.0 800.2,85.0 792.1,86.8 792.1,86.8 792.1,86.8 784.3,89.0 784.3,89.0 784.3,89.0 776.7,91.7 776.7,91.7 776.7,91.7 769.3,94.8 769.3,94.8 769.3,94.8 762.1,98.3 762.1,98.3 762.1,98.3 755.2,102.2 755.2,102.2 755.2,102.2 748.5,106.6 748.5,106.6 748.5,106.6 742.0,111.4 742.0,111.4 742.0,111.4 735.9,116.5 735.9,116.5 735.9,116.6 730.0,122.1 730.0,122.1 730.0,122.1 724.3,128.1 724.3,128.1 716.3,137.2 716.3,137.2 711.0,143.5 711.0,143.5 711.0,143.5 706.0,150.2 706.0,150.2 706.0,150.2 701.3,157.2 701.3,157.2 701.3,157.2 696.9,164.6 696.9,164.6 696.9,164.6 692.8,172.3 692.8,172.3 692.8,172.3 689.0,180.4 689.0,180.4 684.5,190.3 684.5,190.3 681.1,198.6 681.1,198.6 681.1,198.6 678.0,207.2 678.0,207.2 678.0,207.2 675.2,216.1 675.2,216.1 675.2,216.1 672.7,225.2 672.7,225.2 672.7,225.2 672.7,225.2" fill="none" stroke="#2c333a" stroke-width="22" stroke-linejoin="round" stroke-linecap="round" stroke-opacity="0.22"/>
<polyline points="672.7,225.2 670.6,234.7 670.6,234.7 670.6,234.7 668.8,244.4 668.8,244.4 667.3,253.9 667.3,253.9 665.8,263.6 665.8,263.6 665.8,263.6 664.7,273.6 664.7,273.6 664.7,273.6 663.9,283.8 663.9,283.8 663.9,283.8 663.4,294.3 663.4,294.3 663.4,294.3 663.2,304.9 663.2,304.9 663.2,304.9 663.4,315.7 663.4,315.7 663.4,315.7 663.9,326.7 663.9,326.7 663.9,326.7 664.7,337.9 664.7,337.9 664.7,337.9 665.1,343.9 665.1,343.9 666.2,355.0 666.2,355.0 666.2,355.0 667.7,366.2 667.7,366.2 667.7,366.2 669.5,377.5 669.5,377.5 669.5,377.5 671.7,388.9 671.7,388.9 671.7,388.9 674.2,400.4 674.2,400.4 674.2,400.4 677.1,411.9 677.1,411.9 677.1,411.9 680.3,423.5 680.3,423.5 680.3,423.5 683.8,435.2 683.8,435.2 683.8,435.2 687.6,446.8 687.6,446.8 687.6,446.8 691.7,458.5 691.7,458.5 691.7,458.5 696.1,470.1 696.1,470.1 696.1,470.1 700.8,481.7 700.8,481.7 700.8,481.7 705.7,493.3 705.7,493.3 705.7,493.3 710.9,504.8 710.9,504.8 710.9,504.8 716.4,516.2 716.4,516.2 716.4,516.2 722.1,527.6 722.1,527.6 722.1,527.6 728.0,538.9 728.0,538.9 728.0,538.9 734.1,550.1 734.1,550.1 734.1,550.1 740.4,561.2 740.4,561.2 740.4,561.2 746.9,572.2 746.9,572.2 746.9,572.2 753.6,583.0 753.6,583.0 753.6,583.0 760.5,593.8 760.5,593.8 760.5,593.8 767.5,604.3 767.5,604.3 767.5,604.3 774.7,614.8 774.7,614.8 774.7,614.8 782.1,625.0 782.1,625.0 782.1,625.0 789.6,635.1 789.6,635.1 790.9,636.8 790.9,636.8 798.8,647.0 798.8,647.0 798.8,647.0 806.9,656.8 806.9,656.8 806.9,656.8 815.2,666.5 815.2,666.5 815.2,666.5 823.5,675.9 823.5,675.9 823.5,675.9 832.0,685.0 832.0,685.0 832.0,685.0 840.7,693.9 840.7,693.9 840.7,693.9 849.4,702.4 849.4,702.4 849.4,702.4 858.2,710.7 858.2,710.7 858.2,710.7 867.2,718.7 867.2,718.7 867.2,718.7 876.2,726.3 876.2,726.3 876.2,726.3 885.2,733.7 885.2,733.7 885.2,733.7 894.4,740.7 894.4,740.7 894.4,740.7 903.5,747.3 903.5,747.3 910.2,751.9 910.2,751.9 919.7,758.4 919.7,758.4 919.7,758.4 929.2,764.6 929.2,764.6 929.2,764.6 938.7,770.3 938.7,770.3 938.7,770.3 938.7,770.3 938.7,770.3 938.7,770.3 938.7,770.3 938.7,770.3 938.7,770.3 938.7,770.3 938.7,770.3 938.7,770.3 938.7,770.3 938.7,770.3 938.7,770.3 938.7,770.3 938.7,770.3 938.7,770.3 938.7,770.3 947.7,772.4 947.7,772.4 947.7,772.4 947.7,772.4 947.7,772.4 947.7,772.4 947.7,772.4 947.7,772.4 947.7,772.4 947.7,772.4 947.7,772.4 947.7,772.4 947.7,772.4 947.7,772.4 947.8,772.4 947.8,772.4 947.8,772.4 947.8,772.4 947.8,772.4 947.8,772.4 947.8,772.4 947.8,772.4 947.8,772.4 947.8,772.4 947.8,772.4 947.8,772.4 947.8,772.4 947.8,772.4 947.8,772.4 947.8,772.4 947.8,772.4 957.3,769.5 957.3,769.5 957.3,769.5 957.3,769.5 957.3,769.5 957.3,769.5 957.3,769.5 957.3,769.5 957.3,769.5 957.3,769.5 957.3,769.5 957.3,769.5 957.3,769.5 957.3,769.5 957.3,769.5 957.3,769.5 957.3,769.5 957.3,769.5 957.3,769.5 957.3,769.5 957.3,769.5 957.3,769.5 957.3,769.5 957.3,769.5 957.3,769.5 957.3,769.5 957.3,769.5 957.3,769.5 957.3,769.5 957.3,769.5 957.3,769.5 957.3,769.5 957.3,769.5 957.3,769.5 957.3,769.5 957.3,769.5 957.3,769.5 957.3,769.5 957.3,769.5 957.3,769.5 957.3,769.5 957.3,769.5 957.3,769.5 957.3,769.5 957.3,769.5 957.3,769.5 957.3,769.5 957.3,769.5 957.3,769.5 957.3,769.5 957.3,689.7 957.3,689.7 957.3,689.7 957.3,689.7 957.3,689.7 957.3,689.7 957.3,689.7 957.3,689.7 957.3,689.7 957.3,689.7 957.3,689.7 957.3,689.7 957.3,689.7 957.3,689.7 957.3,689.7 957.3,689.7 957.2,689.7 957.2,689.7 957.2,689.7 957.2,689.7 957.2,689.7 957.2,689.7 935.7,702.1 935.7,702.1 935.7,702.1 935.7,702.1 935.7,702.1 935.7,702.1 935.7,702.1 935.7,702.1 935.7,702.1 935.7,702.1 935.7,702.1 935.7,702.1 935.7,722.9 924.6,729.2 916.6,724.3 908.6,719.2 900.6,713.7 892.6,707.9 884.6,701.8 876.8,695.4 868.9,688.8 861.2,681.8 853.5,674.7 845.9,667.2 838.4,659.5 831.0,651.6 823.7,643.4 816.5,635.0 809.5,626.4 802.6,617.6 795.9,608.6 789.3,599.5 782.9,590.2 776.6,580.7 770.6,571.1 764.7,561.3 759.0,551.5 753.5,541.5 748.2,531.4 743.2,521.3 738.3,511.0 733.7,500.8 729.4,490.4 725.2,480.1 721.3,469.7 717.7,459.3 714.3,449.0 711.1,438.6 708.3,428.3 705.6,418.0 703.3,407.8 701.2,397.6 699.4,387.5 697.9,377.5 696.6,367.7 695.6,357.9 694.9,348.3 694.5,338.8 694.4,329.4 694.5,320.3 694.9,311.3 695.6,302.4 696.6,293.8 697.9,285.4 699.4,277.2 701.2,269.3 703.3,261.5 705.6,254.0 708.3,246.8 711.1,239.9 714.3,233.2 717.7,226.8 721.3,220.7 725.2,214.8 729.4,209.3 733.7,204.1 738.3,199.2 743.2,194.6 748.2,190.4 753.5,186.5 759.0,182.9 764.7,179.7 770.5,176.8 776.6,174.3 782.8,172.1 789.3,170.3 795.8,168.8 802.6,167.7 809.5,167.0 816.5,166.6 823.7,166.6 830.9,166.9 838.3,167.6 845.8,168.7 853.4,170.1 861.1,171.9 868.9,174.0 876.7,176.5 884.6,179.4 892.5,182.5 900.5,186.1 908.5,189.9 916.5,194.2 924.6,198.7 924.6,198.7 924.6,198.7 924.6,198.7 924.6,198.7 924.6,198.7 924.6,198.7 924.6,198.7 924.6,198.7 924.6,198.7 924.6,198.7 924.6,198.7 924.6,198.7 924.6,198.7 924.6,198.7 924.6,198.7 924.6,198.7 924.6,198.7 924.6,198.7 924.6,198.7 924.6,198.7 924.6,198.7 924.6,198.7 924.6,198.7 924.6,198.7 924.6,198.7 924.6,198.7 924.6,198.7 924.6,198.7 924.6,198.7 924.6,198.7 924.6,198.7 924.6,198.7 924.6,198.7 924.6,198.7 924.6,198.7 924.6,198.7 924.6,198.7 924.6,198.7 924.6,198.7 924.6,198.7 924.6,198.7 924.6,198.7 935.8,192.2 957.2,200.5 957.2,200.5 957.2,200.5 957.2,200.5 957.3,200.5 957.3,200.5 957.3,200.5 957.3,200.5 957.3,200.5 957.3,200.5 957.3,200.5 957.3,200.5 957.3,200.5 957.3,200.5 957.3,200.5 957.3,200.5 957.3,200.5 957.3,200.5 957.3,200.5 957.3,200.5 957.3,200.5 957.3,121.5 957.3,121.5 957.3,121.5 957.3,121.5 957.3,121.5 957.3,121.5 957.3,121.5 957.3,121.5 957.3,121.5 957.3,121.5 957.3,121.5 957.3,121.5 957.3,121.5 957.3,121.5 957.3,121.5 957.3,121.5 957.3,121.5 957.3,121.5 957.3,121.5 957.3,121.5 957.3,121.5 957.3,121.5 957.3,121.5 957.3,121.5 957.3,121.5 957.3,121.5 957.3,121.5 957.3,121.5 957.3,121.5 957.3,121.5 957.3,121.5 957.3,121.5 957.3,121.5 957.3,121.5 957.3,121.5 957.3,121.5 957.3,121.5 957.3,121.5 957.3,121.5 957.3,121.5 957.3,121.5 957.3,121.5 957.3,121.5 947.5,115.9 947.5,115.9 947.5,115.9 937.7,110.8 937.7,110.8 937.7,110.8 927.9,106.1 927.9,106.1 927.9,106.1 918.2,101.8 918.2,101.8 918.2,101.8 908.5,97.9 908.5,97.9 908.5,97.9 898.9,94.4 898.9,94.4 898.9,94.4 889.3,91.4 889.3,91.4 889.3,91.4 879.8,88.8 879.8,88.8 879.8,88.8 870.5,86.6 870.5,86.6 870.5,86.6 861.2,84.9 861.2,84.9 861.2,84.9 852.0,83.6 852.0,83.6 852.0,83.6 843.0,82.7 843.0,82.7 843.0,82.7 834.1,82.3 834.1,82.3 834.1,82.3 825.4,82.3 825.4,82.3 825.4,82.3 816.8,82.8 816.8,82.8 816.8,82.8 808.4,83.7 808.4,83.7 808.4,83.7 800.2,85.0 800.2,85.0 800.2,85.0 792.1,86.8 792.1,86.8 792.1,86.8 784.3,89.0 784.3,89.0 784.3,89.0 776.7,91.7 776.7,91.7 776.7,91.7 769.3,94.8 769.3,94.8 769.3,94.8 762.1,98.3 762.1,98.3 762.1,98.3 755.2,102.2 755.2,102.2 755.2,102.2 748.5,106.6 748.5,106.6 748.5,106.6 742.0,111.4 742.0,111.4 742.0,111.4 735.9,116.5 735.9,116.5 735.9,116.6 730.0,122.1 730.0,122.1 730.0,122.1 724.3,128.1 724.3,128.1 716.3,137.2 716.3,137.2 711.0,143.5 711.0,143.5 711.0,143.5 706.0,150.2 706.0,150.2 706.0,150.2 701.3,157.2 701.3,157.2 701.3,157.2 696.9,164.6 696.9,164.6 696.9,164.6 692.8,172.3 692.8,172.3 692.8,172.3 689.0,180.4 689.0,180.4 684.5,190.3 684.5,190.3 681.1,198.6 681.1,198.6 681.1,198.6 678.0,207.2 678.0,207.2 678.0,207.2 675.2,216.1 675.2,216.1 675.2,216.1 672.7,225.2 672.7,225.2 672.7,225.2 672.7,225.2" fill="none" stroke="#2c333a" stroke-width="9" stroke-linejoin="round" stroke-linecap="round" stroke-opacity="0.25"/>
<linearGradient id="ghl" gradientUnits="userSpaceOnUse" x1="0" y1="220" x2="0" y2="460"><stop offset="0" stop-color="#5f6972" stop-opacity="0"/><stop offset="1" stop-color="#5f6972" stop-opacity="1"/></linearGradient>
<polyline points="924.6,729.2 914.6,723.1 904.5,716.5 894.5,709.4 884.6,701.9 874.8,693.8 865.0,685.4 855.4,676.5 845.8,667.2 836.5,657.6 827.3,647.5 818.3,637.2 809.5,626.4 800.9,615.4 792.5,604.1 784.4,592.5 776.6,580.7 769.0,568.7 761.8,556.4 754.8,544.0 748.2,531.4 741.9,518.7 736.0,505.9 730.4,493.0 725.2,480.1 720.3,467.1 715.9,454.2 711.8,441.2 708.2,428.3 705.0,415.4 702.2,402.7 699.8,390.0 697.8,377.5 696.3,365.2 695.2,353.1 694.5,341.1 694.3,329.4 694.5,318.0 695.2,306.8 696.3,296.0 697.8,285.4 699.8,275.2 702.2,265.4 705.0,255.9 708.2,246.8 711.8,238.1 715.9,229.9 720.3,222.1 725.2,214.8 730.4,208.0 736.0,201.6 741.9,195.7 748.2,190.4 754.8,185.5 761.8,181.2 769.0,177.5 776.6,174.2 784.4,171.6 792.5,169.5 800.9,167.9 809.5,166.9" fill="none" stroke="url(#ghl)" stroke-width="46" stroke-linejoin="round" stroke-linecap="round" stroke-opacity="0.22"/>
<polyline points="924.6,729.2 914.6,723.1 904.5,716.5 894.5,709.4 884.6,701.9 874.8,693.8 865.0,685.4 855.4,676.5 845.8,667.2 836.5,657.6 827.3,647.5 818.3,637.2 809.5,626.4 800.9,615.4 792.5,604.1 784.4,592.5 776.6,580.7 769.0,568.7 761.8,556.4 754.8,544.0 748.2,531.4 741.9,518.7 736.0,505.9 730.4,493.0 725.2,480.1 720.3,467.1 715.9,454.2 711.8,441.2 708.2,428.3 705.0,415.4 702.2,402.7 699.8,390.0 697.8,377.5 696.3,365.2 695.2,353.1 694.5,341.1 694.3,329.4 694.5,318.0 695.2,306.8 696.3,296.0 697.8,285.4 699.8,275.2 702.2,265.4 705.0,255.9 708.2,246.8 711.8,238.1 715.9,229.9 720.3,222.1 725.2,214.8 730.4,208.0 736.0,201.6 741.9,195.7 748.2,190.4 754.8,185.5 761.8,181.2 769.0,177.5 776.6,174.2 784.4,171.6 792.5,169.5 800.9,167.9 809.5,166.9" fill="none" stroke="url(#ghl)" stroke-width="22" stroke-linejoin="round" stroke-linecap="round" stroke-opacity="0.22"/>
</g></g>
<polygon points="957.2,121.5 946.9,130.7 937.9,141.5 930.1,153.4 924.5,163.6 921.7,174.8 920.9,184.1 924.6,198.6 935.8,192.1 957.2,200.5" fill="#434c54" stroke="none" stroke-width="0" />
<polygon points="957.2,769.5 947.8,772.4 938.8,770.3 931.2,765.1 926.2,760.0 923.5,751.6 922.5,744.2 924.6,729.2 935.8,722.9 935.8,702.1 957.2,689.7" fill="#434c54" stroke="none" stroke-width="0" />
<path d="M957.2 121.5 C955.5 123.0 950.1 127.3 946.9 130.7 C943.7 134.0 940.7 137.7 937.9 141.5 C935.1 145.2 932.3 149.7 930.1 153.4 C927.9 157.1 925.9 160.0 924.5 163.6 C923.1 167.2 922.3 171.4 921.7 174.8 C921.1 178.2 920.4 180.1 920.9 184.1 C921.4 188.0 924.0 196.2 924.6 198.6" fill="none" stroke="#0a0a0a" stroke-width="1.2" stroke-linejoin="round" />
<polyline points="956.9,121.7 956.9,200.3" fill="none" stroke="#0a0a0a" stroke-width="1.3" stroke-linejoin="round" stroke-linecap="round" />
<polyline points="956.9,689.7 956.9,780.6" fill="none" stroke="#0a0a0a" stroke-width="1.3" stroke-linejoin="round" stroke-linecap="round" />
<path d="M957.2 769.5 C955.7 770.0 950.8 772.3 947.8 772.4 C944.7 772.5 941.5 771.5 938.8 770.3 C936.0 769.1 933.3 766.8 931.2 765.1 C929.2 763.4 927.5 762.2 926.2 760.0 C925.0 757.7 924.1 754.2 923.5 751.6 C922.8 749.0 922.3 747.9 922.5 744.2 C922.7 740.4 924.2 731.7 924.6 729.2" fill="none" stroke="#0a0a0a" stroke-width="1.2" stroke-linejoin="round" />
<linearGradient id="gr" gradientUnits="userSpaceOnUse" x1="745" y1="0" x2="790" y2="0"><stop offset="0" stop-color="#e0562e"/><stop offset="1" stop-color="#c54b24"/></linearGradient>
<polygon points="924.6,729.2 912.5,721.8 900.5,713.7 888.6,704.9 876.7,695.5 865.0,685.4 853.4,674.7 842.1,663.4 830.9,651.6 820.1,639.3 809.5,626.4 799.2,613.2 789.2,599.5 779.7,585.5 770.5,571.1 761.8,556.4 753.5,541.5 745.6,526.4 738.3,511.1 731.5,495.6 725.2,480.1 719.4,464.5 714.2,449.0 709.6,433.4 705.6,418.0 702.2,402.7 699.4,387.5 697.2,372.6 695.6,357.9 694.6,343.5 694.3,329.4 694.6,315.7 695.6,302.4 697.2,289.6 699.4,277.2 702.2,265.4 705.6,254.0 709.6,243.3 714.2,233.2 719.4,223.6 725.2,214.8 731.5,206.6 738.3,199.2 745.6,192.4 753.5,186.5 761.8,181.2 770.5,176.8 779.7,173.1 789.2,170.2 799.2,168.2 809.5,166.9 820.1,166.5 830.9,166.9 842.1,168.1 853.4,170.1 865.0,172.9 876.7,176.5 888.6,180.9 900.5,186.0 912.5,192.0 924.6,198.6 935.8,192.1 935.8,212.9 957.2,200.5 957.3,240.0 957.3,690.0 957.2,689.7 935.8,702.1 935.8,722.9" fill="#bf4722" stroke="none" stroke-width="0" />
<linearGradient id="gring" gradientUnits="userSpaceOnUse" x1="775" y1="262" x2="822" y2="196"><stop offset="0" stop-color="#cb4e27"/><stop offset="0.45" stop-color="#b5441f"/><stop offset="1" stop-color="#9a3a1b"/></linearGradient>
<clipPath id="cring"><polygon points="957.3,200.5 957.3,200.5 957.3,200.5 957.3,200.5 957.3,200.5 957.3,200.5 957.3,200.5 957.3,200.5 957.3,200.5 957.3,200.5 957.3,200.5 957.3,200.5 946.2,194.3 946.2,194.3 935.1,188.8 935.1,188.8 924.1,184.1 924.1,184.1 913.1,180.0 913.1,180.0 902.3,176.7 902.3,176.7 891.7,174.1 891.7,174.1 881.2,172.3 881.2,172.3 870.9,171.2 870.9,171.2 860.9,170.8 860.9,170.8 851.1,171.2 851.1,171.2 841.6,172.4 841.6,172.4 832.4,174.3 832.4,174.3 823.6,176.9 823.6,176.9 815.2,180.3 815.2,180.3 807.1,184.4 807.1,184.4 799.4,189.2 799.4,189.2 796.2,191.7 793.7,192.7 793.7,192.7 785.6,196.8 785.6,196.8 777.9,201.6 777.9,201.6 770.7,207.2 770.7,207.2 764.0,213.4 763.9,213.4 757.7,220.2 757.6,220.3 751.8,227.8 751.8,227.8 746.5,235.9 746.5,235.9 741.7,244.7 741.7,244.7 737.5,254.1 737.5,254.1 733.8,264.0 733.8,264.0 730.6,274.4 730.6,274.4 728.0,285.3 728.0,285.3 726.0,296.7 726.0,296.8 724.6,308.6 724.6,308.6 723.7,320.9 723.7,320.9 723.4,333.5 723.4,333.5 723.7,346.5 723.7,346.5 724.6,359.7 724.6,359.7 726.0,373.3 726.0,373.3 728.0,387.1 728.0,387.1 730.6,401.0 730.6,401.0 733.8,415.2 733.8,415.2 737.5,429.4 737.5,429.4 741.7,443.7 741.7,443.7 746.5,458.1 746.5,458.1 751.8,472.4 751.8,472.4 757.6,486.7 757.6,486.7 763.9,501.0 763.9,501.0 770.7,515.1 770.7,515.1 777.9,529.0 777.9,529.0 785.6,542.8 785.6,542.8 793.6,556.3 793.6,556.3 802.1,569.6 802.1,569.6 810.9,582.5 810.9,582.5 820.1,595.1 820.1,595.1 829.6,607.4 829.6,607.4 839.3,619.2 839.3,619.2 849.4,630.6 849.4,630.6 859.6,641.5 859.6,641.5 870.1,651.8 870.1,651.8 880.8,661.7 880.8,661.7 891.6,671.0 891.6,671.0 902.5,679.7 902.5,679.7 913.5,687.8 913.5,687.8 924.6,695.3 924.6,695.3 935.7,702.1 935.7,702.2 935.7,702.2 935.7,702.2 935.7,702.2 935.7,702.2 935.8,702.2 935.8,702.2 935.8,702.2 935.8,702.2 935.8,702.2 935.8,702.1 935.8,702.1 935.8,702.1 935.8,702.1 935.8,702.1 935.8,702.1 935.8,702.1 935.8,702.1 935.8,702.1 935.8,702.1 935.8,702.1 935.8,702.1 935.8,676.0 946.1,682.9 946.1,682.9 957.2,689.7 957.2,689.7 957.2,689.7 957.2,689.7 957.2,689.7 957.2,689.7 957.3,689.7 957.3,689.7 957.3,689.7 957.3,689.7 957.3,689.7 957.3,689.7 957.3,689.7 957.3,689.7 957.3,689.7 957.3,689.7 957.3,689.7 957.3,689.7 957.3,689.7 957.3,689.7 957.3,689.7 957.3,689.7 957.3,689.7 957.3,200.5"/></clipPath>
<polygon points="957.3,200.5 957.3,200.5 957.3,200.5 957.3,200.5 957.3,200.5 957.3,200.5 957.3,200.5 957.3,200.5 957.3,200.5 957.3,200.5 957.3,200.5 957.3,200.5 946.2,194.3 946.2,194.3 935.1,188.8 935.1,188.8 924.1,184.1 924.1,184.1 913.1,180.0 913.1,180.0 902.3,176.7 902.3,176.7 891.7,174.1 891.7,174.1 881.2,172.3 881.2,172.3 870.9,171.2 870.9,171.2 860.9,170.8 860.9,170.8 851.1,171.2 851.1,171.2 841.6,172.4 841.6,172.4 832.4,174.3 832.4,174.3 823.6,176.9 823.6,176.9 815.2,180.3 815.2,180.3 807.1,184.4 807.1,184.4 799.4,189.2 799.4,189.2 796.2,191.7 793.7,192.7 793.7,192.7 785.6,196.8 785.6,196.8 777.9,201.6 777.9,201.6 770.7,207.2 770.7,207.2 764.0,213.4 763.9,213.4 757.7,220.2 757.6,220.3 751.8,227.8 751.8,227.8 746.5,235.9 746.5,235.9 741.7,244.7 741.7,244.7 737.5,254.1 737.5,254.1 733.8,264.0 733.8,264.0 730.6,274.4 730.6,274.4 728.0,285.3 728.0,285.3 726.0,296.7 726.0,296.8 724.6,308.6 724.6,308.6 723.7,320.9 723.7,320.9 723.4,333.5 723.4,333.5 723.7,346.5 723.7,346.5 724.6,359.7 724.6,359.7 726.0,373.3 726.0,373.3 728.0,387.1 728.0,387.1 730.6,401.0 730.6,401.0 733.8,415.2 733.8,415.2 737.5,429.4 737.5,429.4 741.7,443.7 741.7,443.7 746.5,458.1 746.5,458.1 751.8,472.4 751.8,472.4 757.6,486.7 757.6,486.7 763.9,501.0 763.9,501.0 770.7,515.1 770.7,515.1 777.9,529.0 777.9,529.0 785.6,542.8 785.6,542.8 793.6,556.3 793.6,556.3 802.1,569.6 802.1,569.6 810.9,582.5 810.9,582.5 820.1,595.1 820.1,595.1 829.6,607.4 829.6,607.4 839.3,619.2 839.3,619.2 849.4,630.6 849.4,630.6 859.6,641.5 859.6,641.5 870.1,651.8 870.1,651.8 880.8,661.7 880.8,661.7 891.6,671.0 891.6,671.0 902.5,679.7 902.5,679.7 913.5,687.8 913.5,687.8 924.6,695.3 924.6,695.3 935.7,702.1 935.7,702.2 935.7,702.2 935.7,702.2 935.7,702.2 935.7,702.2 935.8,702.2 935.8,702.2 935.8,702.2 935.8,702.2 935.8,702.2 935.8,702.1 935.8,702.1 935.8,702.1 935.8,702.1 935.8,702.1 935.8,702.1 935.8,702.1 935.8,702.1 935.8,702.1 935.8,702.1 935.8,702.1 935.8,702.1 935.8,676.0 946.1,682.9 946.1,682.9 957.2,689.7 957.2,689.7 957.2,689.7 957.2,689.7 957.2,689.7 957.2,689.7 957.3,689.7 957.3,689.7 957.3,689.7 957.3,689.7 957.3,689.7 957.3,689.7 957.3,689.7 957.3,689.7 957.3,689.7 957.3,689.7 957.3,689.7 957.3,689.7 957.3,689.7 957.3,689.7 957.3,689.7 957.3,689.7 957.3,689.7 957.3,200.5" fill="url(#gring)" stroke="none" stroke-width="0" />
<g clip-path="url(#cring)">
<polyline points="957.2,689.7 948.7,684.5 940.2,679.0 931.7,673.0 923.3,666.7 914.9,660.1 906.6,653.1 898.4,645.7 890.2,638.1 882.2,630.1 874.3,621.8 866.5,613.2 858.9,604.4 851.4,595.3 844.1,586.0 837.0,576.4 830.1,566.7 823.3,556.7 816.8,546.6 810.6,536.3 804.5,525.8 798.7,515.2 793.2,504.5 787.9,493.7 782.9,482.9 778.2,471.9 773.8,461.0 769.6,450.0 765.8,438.9 762.3,428.0 759.0,417.0 756.1,406.1 753.6,395.2 751.3,384.4 749.4,373.7 747.8,363.2 746.6,352.7 745.7,342.4 745.2,332.3 744.9,322.4 745.1,312.6 745.5,303.1 746.3,293.8 747.5,284.7 749.0,275.9 750.8,267.4 753.0,259.2 755.4,251.2 758.3,243.6 761.4,236.3 764.8,229.3 768.6,222.7 772.6,216.5 777.0,210.6 781.7,205.0 786.6,199.9 791.8,195.2 797.3,190.9 803.0,186.9 809.0,183.4 815.2,180.3" fill="none" stroke="#e75a30" stroke-width="20" stroke-linejoin="round" stroke-linecap="round" stroke-opacity="0.3"/>
<polyline points="957.2,689.7 948.7,684.5 940.2,679.0 931.7,673.0 923.3,666.7 914.9,660.1 906.6,653.1 898.4,645.7 890.2,638.1 882.2,630.1 874.3,621.8 866.5,613.2 858.9,604.4 851.4,595.3 844.1,586.0 837.0,576.4 830.1,566.7 823.3,556.7 816.8,546.6 810.6,536.3 804.5,525.8 798.7,515.2 793.2,504.5 787.9,493.7 782.9,482.9 778.2,471.9 773.8,461.0 769.6,450.0 765.8,438.9 762.3,428.0 759.0,417.0 756.1,406.1 753.6,395.2 751.3,384.4 749.4,373.7 747.8,363.2 746.6,352.7 745.7,342.4 745.2,332.3 744.9,322.4 745.1,312.6 745.5,303.1 746.3,293.8 747.5,284.7 749.0,275.9 750.8,267.4 753.0,259.2 755.4,251.2 758.3,243.6 761.4,236.3 764.8,229.3 768.6,222.7 772.6,216.5 777.0,210.6 781.7,205.0 786.6,199.9 791.8,195.2 797.3,190.9 803.0,186.9 809.0,183.4 815.2,180.3" fill="none" stroke="#e75a30" stroke-width="9" stroke-linejoin="round" stroke-linecap="round" stroke-opacity="0.45"/>
</g>
<polygon points="818.8,212.9 814.4,215.6 803.6,223.6 789.3,237.9 776.8,259.4 769.7,286.2 767.0,313.0 767.0,340.7 770.0,380.9 773.6,405.9 759.3,412.0 762.7,427.0 780.4,430.4 784.5,441.3 786.8,446.8 795.8,468.3 801.0,482.0 809.2,496.8 822.6,516.9 838.2,539.2 857.0,568.4 872.0,593.0 900.1,624.4 932.3,647.6 934.0,674.4 935.9,689.0 957.4,689.7 957.4,240.0 954.0,239.7 941.5,232.6 931.3,228.3 925.0,219.7 907.3,214.0 880.4,210.7 847.4,207.5 839.4,208.4 828.7,208.4 820.6,205.8 815.2,206.6" fill="#9f3b1c" stroke="none" stroke-width="0" />
<polygon points="900.0,219.0 915.6,222.1 931.3,228.3 941.5,232.6 954.0,239.7 957.4,238.5 957.4,200.3 935.7,213.0 925.0,208.4 910.0,200.0 900.0,196.0" fill="#93371a" stroke="none" stroke-width="0" />
<polygon points="935.8,212.9 957.2,200.5 957.4,238.5 954.0,239.7 954.0,229.3 954.0,229.3 948.5,231.1 941.5,231.1 934.4,228.3 928.9,223.6 925.8,217.4 925.0,208.4" fill="#9f3b1c" stroke="none" stroke-width="0" />
<polygon points="941.5,232.2 954.0,229.5 954.0,239.7" fill="#b8461f" stroke="none" stroke-width="0" />
<polygon points="820.6,205.8 835.8,235.8 850.1,266.1 862.6,296.5 875.1,330.5 884.0,360.0 886.2,369.0 893.4,398.1 897.8,415.6 933.4,398.1 933.4,398.1 928.3,383.6 918.1,360.3 909.0,343.0 896.5,314.4 880.4,280.4 862.6,242.9 847.4,208.0 839.4,208.4 828.7,208.4" fill="#bf4722" stroke="none" stroke-width="0" />
<linearGradient id="gfl" gradientUnits="userSpaceOnUse" x1="885" y1="430" x2="945" y2="400"><stop offset="0" stop-color="#a03c1c"/><stop offset="1" stop-color="#c24a23"/></linearGradient>
<polygon points="880.2,428.2 893.4,419.2 933.4,398.1 953.0,402.5 899.2,434.3 892.5,431.5 885.8,429.2" fill="url(#gfl)" stroke="none" stroke-width="0" />
<linearGradient id="gbore" gradientUnits="userSpaceOnUse" x1="875" y1="450" x2="930" y2="480"><stop offset="0" stop-color="#a9401f"/><stop offset="0.35" stop-color="#c24a23"/><stop offset="1" stop-color="#c24a23"/></linearGradient>
<polygon points="898.5,508.0 886.0,495.4 877.4,481.4 873.5,467.3 872.3,459.7 874.0,453.0 877.9,447.4 883.5,444.1 890.2,444.3 896.4,446.3 899.2,447.4 932.8,430.3 934.5,440.7 940.7,454.8 950.1,467.3 957.2,473.5 914.1,497.8" fill="url(#gbore)" stroke="none" stroke-width="0" />
<polygon points="762.7,418.8 784.5,422.2 811.7,430.4 838.9,438.6 861.7,445.4 860.9,452.4 832.1,444.0 811.7,437.2 784.5,430.4 762.7,427.0" fill="#b04220" stroke="none" stroke-width="0" />
<linearGradient id="ghs" gradientUnits="userSpaceOnUse" x1="770" y1="410" x2="870" y2="435"><stop offset="0" stop-color="#b24321"/><stop offset="0.4" stop-color="#98391b"/><stop offset="1" stop-color="#8e3519"/></linearGradient>
<path d="M809.0 241.5 C810.5 240.4 812.5 239.3 814.4 238.8 C816.3 238.3 818.4 238.4 820.3 238.3 C822.2 238.2 824.0 238.0 826.0 238.5 C828.0 239.0 830.2 239.2 832.2 241.5 C834.2 243.8 834.4 244.0 838.0 252.0 C841.6 260.0 848.9 277.8 853.6 289.4 C858.3 301.0 862.5 311.8 866.1 321.6 C869.7 331.4 873.0 342.0 875.1 348.4 C877.2 354.8 877.6 356.6 878.7 360.0 C879.8 363.4 880.6 364.0 881.8 369.0 C883.0 374.0 884.8 384.7 886.0 390.0 C887.2 395.3 888.5 398.4 889.0 401.0 C889.5 403.6 889.6 404.6 889.3 405.7 C889.0 406.8 888.9 407.2 887.3 407.8 C885.7 408.4 883.3 409.6 879.8 409.3 C876.3 409.0 873.0 407.4 866.2 405.9 C859.4 404.4 847.5 402.2 838.9 400.4 C830.3 398.6 820.8 397.0 814.4 395.0 C808.0 393.0 804.6 390.7 800.8 388.2 C796.9 385.7 794.1 383.0 791.3 380.0 C788.5 377.0 785.6 373.2 784.1 370.0 C782.6 366.8 783.0 365.7 782.1 360.8 C781.2 355.9 779.1 346.3 778.5 340.7 C777.9 335.1 778.0 333.1 778.3 327.0 C778.6 320.9 779.0 311.7 780.3 304.0 C781.5 296.3 783.4 288.2 785.8 280.8 C788.2 273.4 791.4 265.3 794.7 259.4 C798.0 253.4 803.0 248.1 805.4 245.1 C807.8 242.1 807.5 242.6 809.0 241.5Z" fill="#f5f5f5" stroke="#1a0a05" stroke-width="1.1" stroke-linejoin="round" />
<path d="M957.4 239.5 C956.8 239.6 956.6 241.0 954.0 239.9 C951.4 238.8 945.3 234.7 941.5 232.8 C937.7 230.9 935.6 230.2 931.3 228.5 C927.0 226.8 920.8 223.9 915.6 222.3 C910.4 220.8 903.8 219.8 900.0 219.2 C896.2 218.6 895.7 218.1 893.0 218.8 C890.3 219.5 886.0 221.3 884.0 223.2 C882.0 225.1 881.8 227.4 881.3 230.4 C880.8 233.4 880.7 237.2 881.3 241.1 C881.9 245.0 882.9 248.5 884.9 253.6 C886.9 258.7 889.9 264.9 893.0 271.5 C896.1 278.1 900.1 285.6 903.7 293.0 C907.3 300.4 910.8 308.5 914.4 316.2 C918.0 323.9 922.5 333.5 925.1 339.4 C927.7 345.3 927.5 347.4 929.7 351.6 C931.9 355.8 935.6 361.1 938.5 364.7 C941.4 368.3 944.3 371.0 947.2 373.4 C950.1 375.8 954.2 378.1 955.9 379.2 C957.6 380.3 957.1 379.7 957.3 379.8 L959 380 L959 239.5 Z" fill="#f5f5f5"/>
<path d="M811.8 445.0 C812.7 444.6 813.9 442.6 817.2 442.3 C820.5 442.0 826.1 442.1 831.5 443.2 C836.9 444.2 844.4 446.9 849.4 448.6 C854.4 450.3 859.3 452.5 861.3 453.3 L861.2 453.3 C861.2 454.1 860.5 454.3 861.0 457.9 C861.5 461.5 862.3 469.6 864.1 475.1 C865.9 480.6 868.8 485.8 871.9 490.7 C875.0 495.6 878.5 499.6 882.9 504.8 C887.3 510.0 895.9 519.1 898.5 522.0 L898.5 522.0 L916.6 512.4 L916.6 512.4 C917.0 513.4 917.4 513.9 918.8 518.6 C920.2 523.3 923.0 532.0 924.8 540.7 C926.6 549.4 928.7 561.6 929.8 570.8 C930.9 580.0 931.0 589.0 931.4 595.8 C931.8 602.6 932.1 609.1 932.3 611.8 L932.3 611.8 C932.1 612.1 932.0 612.7 931.4 613.6 C930.8 614.5 930.3 616.3 928.7 617.2 C927.1 618.1 924.6 619.3 921.6 619.0 C918.6 618.7 914.4 617.2 910.8 615.4 C907.2 613.6 903.7 611.6 900.1 608.3 C896.5 605.0 893.6 600.6 889.4 595.8 C885.2 591.0 879.3 585.2 875.1 579.7 C870.9 574.2 868.3 569.5 864.0 563.0 C859.7 556.5 854.4 548.7 849.4 541.0 C844.4 533.3 838.5 524.3 834.0 516.9 C829.5 509.5 825.9 502.9 822.6 496.8 C819.3 490.7 816.3 485.1 814.0 480.0 C811.7 474.9 810.1 470.2 809.0 466.0 C807.9 461.8 807.6 457.8 807.6 455.0 C807.6 452.2 808.1 450.7 808.8 449.0 C809.5 447.3 811.3 445.7 811.8 445.0Z" fill="#f5f5f5" stroke="#1a0a05" stroke-width="1.0" stroke-linejoin="round" />
<polygon points="932.8,430.3 957.3,415.6 959.0,415.6 959.0,473.5 957.2,473.5 950.1,467.3 940.7,454.8 934.5,440.7" fill="#f5f5f5" stroke="none" stroke-width="0" />
<path d="M818.8 212.9 C818.1 213.3 816.9 213.8 814.4 215.6 C811.9 217.4 807.8 219.9 803.6 223.6 C799.4 227.3 793.8 231.9 789.3 237.9 C784.8 243.9 780.1 251.3 776.8 259.4 C773.5 267.4 771.3 277.3 769.7 286.2 C768.1 295.1 767.5 303.9 767.0 313.0 C766.5 322.1 766.5 329.4 767.0 340.7 C767.5 352.0 768.9 370.0 770.0 380.9 C771.1 391.8 773.0 401.7 773.6 405.9" fill="none" stroke="#0d0502" stroke-width="1.25" stroke-linejoin="round" />
<path d="M780.4 430.4 C781.1 432.2 783.4 438.6 784.5 441.3 C785.6 444.0 784.9 442.3 786.8 446.8 C788.7 451.3 793.4 462.4 795.8 468.3 C798.2 474.2 798.8 477.2 801.0 482.0 C803.2 486.8 805.6 491.0 809.2 496.8 C812.8 502.6 817.8 509.8 822.6 516.9 C827.4 524.0 832.5 530.6 838.2 539.2 C843.9 547.8 851.4 559.4 857.0 568.4 C862.6 577.4 864.8 583.7 872.0 593.0 C879.2 602.3 890.1 615.3 900.1 624.4 C910.1 633.5 926.9 643.7 932.3 647.6" fill="none" stroke="#0d0502" stroke-width="1.25" stroke-linejoin="round" />
<path d="M815.2 206.6 C817.1 210.6 823.0 222.8 826.8 230.4 C830.6 238.0 833.5 242.2 838.0 252.0 C842.5 261.8 848.9 277.8 853.6 289.4 C858.3 301.0 862.5 311.8 866.1 321.6 C869.7 331.4 873.0 342.0 875.1 348.4 C877.2 354.8 877.6 356.6 878.7 360.0 C879.8 363.4 880.1 362.6 881.8 369.0 C883.5 375.4 887.2 389.7 889.0 398.1 C890.8 406.5 892.1 415.7 892.7 419.2" fill="none" stroke="#0d0502" stroke-width="1.25" stroke-linejoin="round" />
<path d="M820.6 205.8 C823.1 210.8 830.9 225.8 835.8 235.8 C840.7 245.9 845.6 256.0 850.1 266.1 C854.6 276.2 858.4 285.8 862.6 296.5 C866.8 307.2 871.5 319.9 875.1 330.5 C878.7 341.1 882.1 353.6 884.0 360.0 C885.9 366.4 884.6 362.6 886.2 369.0 C887.8 375.4 891.5 390.3 893.4 398.1 C895.3 405.9 897.1 412.7 897.8 415.6" fill="none" stroke="#0d0502" stroke-width="1.25" stroke-linejoin="round" />
<path d="M847.4 208.0 C849.9 213.8 857.1 230.8 862.6 242.9 C868.1 255.0 874.8 268.5 880.4 280.4 C886.0 292.3 891.7 304.0 896.5 314.4 C901.3 324.8 905.4 335.4 909.0 343.0 C912.6 350.6 914.9 353.5 918.1 360.3 C921.3 367.1 925.8 377.3 928.3 383.6 C930.8 389.9 932.5 395.7 933.4 398.1" fill="none" stroke="#0d0502" stroke-width="1.25" stroke-linejoin="round" />
<path d="M957.4 239.5 C956.8 239.6 956.6 241.0 954.0 239.9 C951.4 238.8 945.3 234.7 941.5 232.8 C937.7 230.9 935.6 230.2 931.3 228.5 C927.0 226.8 920.8 223.9 915.6 222.3 C910.4 220.8 903.8 219.8 900.0 219.2 C896.2 218.6 895.7 218.1 893.0 218.8 C890.3 219.5 886.0 221.3 884.0 223.2 C882.0 225.1 881.8 227.4 881.3 230.4 C880.8 233.4 880.7 237.2 881.3 241.1 C881.9 245.0 882.9 248.5 884.9 253.6 C886.9 258.7 889.9 264.9 893.0 271.5 C896.1 278.1 900.1 285.6 903.7 293.0 C907.3 300.4 910.8 308.5 914.4 316.2 C918.0 323.9 922.5 333.5 925.1 339.4 C927.7 345.3 927.5 347.4 929.7 351.6 C931.9 355.8 935.6 361.1 938.5 364.7 C941.4 368.3 944.3 371.0 947.2 373.4 C950.1 375.8 954.2 378.1 955.9 379.2 C957.6 380.3 957.1 379.7 957.3 379.8" fill="none" stroke="#0d0502" stroke-width="1.25" stroke-linejoin="round" />
<path d="M847.4 207.5 C846.1 207.7 842.5 208.2 839.4 208.4 C836.3 208.6 831.8 208.8 828.7 208.4 C825.6 208.0 822.9 206.1 820.6 205.8 C818.4 205.5 816.1 206.5 815.2 206.6" fill="none" stroke="#0d0502" stroke-width="1.25" stroke-linejoin="round" />
<path d="M773.6 405.9 L759.3 412.0 L759.3 412.0 L762.7 418.8 L762.7 418.8 C766.3 419.4 776.3 420.3 784.5 422.2 C792.7 424.1 802.6 427.7 811.7 430.4 C820.8 433.1 830.6 436.1 838.9 438.6 C847.2 441.1 857.9 444.3 861.7 445.4 L861.7 445.4 C862.2 444.3 863.3 441.0 864.5 439.0 C865.7 437.0 867.3 434.9 869.0 433.4 C870.7 431.9 872.8 431.1 874.6 430.1 C876.4 429.1 878.8 427.8 879.6 427.4 L879.6 427.4 C875.1 426.1 861.7 422.2 852.6 419.8 C843.5 417.4 834.4 414.7 825.3 412.7 C816.2 410.7 806.7 409.0 798.1 407.9 C789.5 406.8 777.7 406.2 773.6 405.9Z" fill="url(#ghs)" stroke="#0d0502" stroke-width="1.1" stroke-linejoin="round" />
<path d="M762.7 427.0 C766.3 427.6 776.3 428.7 784.5 430.4 C792.7 432.1 803.8 434.9 811.7 437.2 C819.6 439.5 823.9 441.5 832.1 444.0 C840.3 446.5 856.1 451.0 860.9 452.4" fill="none" stroke="#0d0502" stroke-width="1.1" stroke-linejoin="round" />
<path d="M899.2 434.3 C898.1 433.8 894.7 432.4 892.5 431.5 C890.3 430.6 887.8 429.7 885.8 429.2 C883.8 428.7 882.1 428.5 880.2 428.7 C878.3 428.9 876.5 429.3 874.6 430.1 C872.7 430.9 870.7 431.9 869.0 433.4 C867.3 434.9 865.7 437.0 864.5 439.0 C863.3 441.0 862.5 443.2 862.0 445.2 C861.5 447.2 861.4 448.7 861.2 450.8 C861.0 452.9 860.5 453.8 861.0 457.9 C861.5 461.9 862.3 469.6 864.1 475.1 C865.9 480.6 868.8 485.8 871.9 490.7 C875.0 495.6 878.5 499.6 882.9 504.8 C887.3 510.0 895.9 519.1 898.5 522.0" fill="none" stroke="#0d0502" stroke-width="1.25" stroke-linejoin="round" />
<path d="M899.2 447.4 C898.7 447.2 897.9 446.8 896.4 446.3 C894.9 445.8 892.4 444.7 890.2 444.3 C888.1 443.9 885.5 443.6 883.5 444.1 C881.5 444.6 879.5 445.9 877.9 447.4 C876.3 448.9 874.9 450.9 874.0 453.0 C873.1 455.1 872.4 457.3 872.3 459.7 C872.2 462.1 872.6 463.7 873.5 467.3 C874.4 470.9 875.3 476.7 877.4 481.4 C879.5 486.1 882.5 491.0 886.0 495.4 C889.5 499.8 896.4 505.9 898.5 508.0" fill="none" stroke="#0d0502" stroke-width="1.25" stroke-linejoin="round" />
<polyline points="899.2,434.3 899.2,447.4" fill="none" stroke="#0d0502" stroke-width="1.25" stroke-linejoin="round" stroke-linecap="round" />
<polyline points="880.2,428.2 893.4,419.2" fill="none" stroke="#0d0502" stroke-width="1.1" stroke-linejoin="round" stroke-linecap="round" />
<polyline points="898.5,508.0 898.5,522.0 917.3,511.9" fill="none" stroke="#0d0502" stroke-width="1.25" stroke-linejoin="round" stroke-linecap="round" />
<polyline points="898.5,508.0 957.2,473.5" fill="none" stroke="#0d0502" stroke-width="1.25" stroke-linejoin="round" stroke-linecap="round" />
<polyline points="899.2,434.3 953.0,402.5 957.3,400.5" fill="none" stroke="#0d0502" stroke-width="1.25" stroke-linejoin="round" stroke-linecap="round" />
<polyline points="899.2,447.4 932.8,430.3 957.3,415.6" fill="none" stroke="#0d0502" stroke-width="1.25" stroke-linejoin="round" stroke-linecap="round" />
<polyline points="893.4,419.2 933.4,398.1 953.0,402.5 953.0,381.0" fill="none" stroke="#0d0502" stroke-width="1.25" stroke-linejoin="round" stroke-linecap="round" />
<path d="M932.8 430.3 C933.1 432.0 933.2 436.6 934.5 440.7 C935.8 444.8 938.1 450.4 940.7 454.8 C943.3 459.2 947.4 464.2 950.1 467.3 C952.9 470.4 956.0 472.5 957.2 473.5" fill="none" stroke="#0d0502" stroke-width="1.25" stroke-linejoin="round" />
<path d="M890.7 446.9 C891.0 450.0 890.9 459.9 892.2 465.7 C893.5 471.4 895.9 477.0 898.5 481.4 C901.1 485.8 905.3 489.6 907.9 492.3 C910.5 495.0 913.1 496.9 914.1 497.8" fill="none" stroke="#0d0502" stroke-width="1.1" stroke-linejoin="round" />
<polyline points="957.3,199.6 957.3,241.5" fill="none" stroke="#0d0502" stroke-width="1" stroke-linejoin="round" stroke-linecap="round" />
<polyline points="957.3,379.8 957.3,415.6" fill="none" stroke="#0d0502" stroke-width="1" stroke-linejoin="round" stroke-linecap="round" />
<polyline points="957.3,473.5 957.3,780.0" fill="none" stroke="#0d0502" stroke-width="1" stroke-linejoin="round" stroke-linecap="round" />
<polyline points="933.2,647.6 934.0,674.4 935.5,688.0" fill="none" stroke="#0d0502" stroke-width="1.1" stroke-linejoin="round" stroke-linecap="round" />
<path d="M925.0 208.4 C925.1 209.9 925.1 214.9 925.8 217.4 C926.4 219.9 927.5 221.8 928.9 223.6 C930.3 225.4 932.3 227.1 934.4 228.3 C936.5 229.6 939.1 230.6 941.5 231.1 C943.9 231.6 946.4 231.4 948.5 231.1 C950.6 230.8 953.1 229.6 954.0 229.3" fill="none" stroke="#0d0502" stroke-width="1.1" stroke-linejoin="round" />
<polyline points="954.0,229.3 954.0,239.7" fill="none" stroke="#0d0502" stroke-width="1.1" stroke-linejoin="round" stroke-linecap="round" />
<polyline points="900.0,219.0 915.6,222.1 931.3,228.3 941.5,232.6 954.0,239.7 957.4,238.5" fill="none" stroke="#0d0502" stroke-width="1.25" stroke-linejoin="round" stroke-linecap="round" />
<path d="M789.5 381.3 C788.3 379.6 783.7 374.3 782.1 371.0 C780.5 367.6 780.9 366.2 779.9 361.2 C779.0 356.2 777.0 346.7 776.3 340.9 C775.7 335.2 775.8 333.1 776.1 326.9 C776.4 320.7 776.9 311.4 778.1 303.6 C779.4 295.9 781.3 287.7 783.7 280.1 C786.1 272.6 789.4 264.4 792.8 258.3 C796.1 252.3 801.2 246.8 803.7 243.7 C806.1 240.7 806.8 240.6 807.4 239.9" fill="none" stroke="#0d0502" stroke-width="0.8" stroke-linejoin="round" />
<path d="M898.4 609.7 C896.6 607.7 891.9 602.0 887.7 597.2 C883.6 592.5 877.6 586.6 873.4 581.0 C869.1 575.5 866.5 570.7 862.2 564.2 C857.9 557.7 852.6 549.9 847.6 542.2 C842.5 534.5 836.6 525.4 832.1 518.0 C827.6 510.6 824.0 504.0 820.7 497.8 C817.3 491.7 814.3 486.1 812.0 480.9 C809.7 475.7 808.0 470.8 806.9 466.5 C805.8 462.3 805.7 457.2 805.4 455.3" fill="none" stroke="#0d0502" stroke-width="0.8" stroke-linejoin="round" />
<path d="M879.4 241.7 C880.0 243.8 881.1 249.2 883.0 254.3 C885.0 259.4 888.1 265.8 891.2 272.4 C894.3 279.0 898.3 286.4 901.9 293.9 C905.5 301.3 909.0 309.3 912.6 317.0 C916.1 324.8 920.7 334.3 923.3 340.2 C925.8 346.1 927.1 350.3 927.8 352.3" fill="none" stroke="#0d0502" stroke-width="0.8" stroke-linejoin="round" />
<path d="M920.7 518.1 C921.7 521.8 924.9 531.5 926.8 540.3 C928.6 549.0 930.7 561.3 931.8 570.6 C932.9 579.8 933.0 588.8 933.4 595.7 C933.8 602.5 934.2 602.6 934.3 611.7 C934.4 620.7 934.0 643.6 934.0 650.0" fill="none" stroke="#0d0502" stroke-width="0.8" stroke-linejoin="round" />
<clipPath id="cband"><polygon points="714.1,233.1 714.1,233.1 711.0,239.8 711.0,239.8 711.0,239.8 708.1,246.7 708.1,246.7 708.1,246.7 705.5,254.0 705.5,254.0 705.5,254.0 703.2,261.5 703.2,261.5 703.2,261.5 701.1,269.2 701.1,269.2 701.1,269.2 699.3,277.2 699.3,277.2 699.3,277.2 697.7,285.4 697.7,285.4 697.7,285.4 696.5,293.8 696.5,293.8 696.5,293.8 695.5,302.4 695.5,302.4 695.5,302.4 694.8,311.2 694.8,311.2 694.8,311.2 694.4,320.2 694.4,320.2 694.4,320.2 694.2,329.4 694.2,329.4 694.2,329.4 694.4,338.7 694.4,338.8 694.4,338.8 694.8,348.2 694.8,348.2 694.8,348.2 695.5,357.9 695.5,357.9 695.5,357.9 696.5,367.7 696.5,367.7 696.5,367.7 697.7,377.5 697.7,377.5 697.7,377.5 699.3,387.5 699.3,387.5 699.3,387.5 701.1,397.6 701.1,397.6 701.1,397.6 703.1,407.8 703.1,407.8 703.1,407.8 705.5,418.0 705.5,418.0 705.5,418.0 708.1,428.3 708.1,428.3 708.1,428.3 711.0,438.6 711.0,438.6 711.0,438.6 714.1,449.0 714.1,449.0 714.1,449.0 717.5,459.4 717.5,459.4 717.5,459.4 721.2,469.7 721.2,469.7 721.2,469.7 725.1,480.1 725.1,480.1 725.1,480.1 729.2,490.5 729.2,490.5 729.2,490.5 733.6,500.8 733.6,500.8 733.6,500.8 738.2,511.1 738.2,511.1 738.2,511.1 743.1,521.3 743.1,521.3 743.1,521.3 748.1,531.5 748.1,531.5 748.1,531.5 753.4,541.5 753.4,541.5 753.4,541.5 758.9,551.5 758.9,551.5 758.9,551.5 764.6,561.4 764.6,561.4 764.6,561.4 770.4,571.1 770.4,571.1 770.4,571.1 776.5,580.8 776.5,580.8 776.5,580.8 782.8,590.2 782.8,590.2 782.8,590.2 789.2,599.6 789.2,599.6 789.2,599.6 795.8,608.7 795.8,608.7 795.8,608.7 802.5,617.7 802.5,617.7 802.5,617.7 809.4,626.5 809.4,626.5 809.4,626.5 816.4,635.1 816.4,635.1 816.4,635.1 823.6,643.5 823.6,643.5 823.6,643.5 830.9,651.7 830.9,651.7 830.9,651.7 838.3,659.6 838.3,659.6 838.3,659.6 845.8,667.3 845.8,667.3 845.8,667.3 853.4,674.8 853.4,674.8 853.4,674.8 861.1,682.0 861.1,682.0 861.1,682.0 868.8,688.9 868.8,688.9 868.8,688.9 876.7,695.6 876.7,695.6 876.7,695.6 884.6,701.9 884.6,701.9 884.6,701.9 892.5,708.0 892.5,708.0 892.5,708.0 900.5,713.8 900.5,713.8 900.5,713.8 908.5,719.3 908.5,719.3 908.5,719.3 916.5,724.5 916.5,724.5 916.5,724.5 924.6,729.3 924.6,729.3 924.6,729.3 924.6,729.3 924.6,729.3 924.6,729.3 924.6,729.3 924.6,729.3 924.6,729.3 924.6,729.3 924.6,729.3 924.6,729.3 935.8,722.9 935.8,722.9 935.8,722.9 935.8,722.9 935.8,722.9 935.8,722.9 935.8,722.9 935.8,722.9 935.8,722.9 935.8,722.9 935.8,722.9 935.8,722.9 935.8,722.9 935.8,722.9 935.8,722.9 935.8,722.9 935.8,722.9 935.8,722.9 935.8,722.9 935.8,722.9 935.8,722.9 935.8,722.9 935.8,722.9 935.8,722.9 935.8,722.9 935.8,722.9 935.8,722.9 935.8,722.9 935.8,722.9 935.8,722.9 935.8,722.9 935.8,722.9 935.8,722.9 935.8,722.9 935.8,722.9 935.8,722.9 935.8,722.9 935.8,722.9 935.8,722.9 935.8,722.9 935.8,722.9 935.8,722.9 935.8,722.9 935.8,702.1 957.3,689.7 957.3,689.7 957.3,689.7 957.3,689.7 957.3,689.7 957.3,689.7 957.3,689.7 957.3,689.7 957.3,689.7 957.3,689.7 957.3,689.7 957.3,689.7 957.3,689.7 957.3,689.7 957.3,689.7 957.3,689.7 957.3,689.7 957.3,689.7 957.3,689.7 957.3,689.7 957.3,689.7 957.3,689.7 949.9,685.2 942.5,680.4 935.1,675.4 927.7,670.0 920.4,664.4 913.1,658.5 905.9,652.4 898.8,646.0 891.7,639.4 884.7,632.5 877.8,625.4 870.9,618.1 864.2,610.5 857.6,602.8 851.1,594.9 844.8,586.8 838.6,578.5 832.5,570.1 826.6,561.5 820.8,552.7 815.2,543.9 809.8,534.9 804.6,525.8 799.5,516.6 794.7,507.3 790.0,497.9 785.5,488.5 781.3,479.0 777.2,469.5 773.4,460.0 769.8,450.4 766.5,440.8 763.3,431.3 760.4,421.7 757.8,412.2 755.4,402.7 753.2,393.3 751.3,383.9 749.6,374.6 748.2,365.4 747.1,356.3 746.2,347.3 745.5,338.4 745.1,329.7 745.0,321.1 745.1,312.6 745.5,304.3 746.2,296.2 747.1,288.3 748.2,280.5 749.6,273.0 751.3,265.6 753.2,258.5 755.4,251.6 757.8,244.9 760.4,238.5 763.3,232.3 766.5,226.4 769.8,220.8 773.4,215.4 777.2,210.3 781.3,205.5 785.5,201.0 790.0,196.8 794.6,192.9 796.2,191.8 799.3,190.5 805.1,188.5 811.0,186.8 817.0,185.4 823.2,184.4 829.6,183.7 836.1,183.4 842.7,183.3 849.4,183.7 856.2,184.3 863.1,185.3 870.1,186.6 877.2,188.2 884.4,190.2 884.4,190.2 891.6,192.5 898.9,195.1 901.6,196.2 906.2,198.1 913.5,201.3 920.9,204.9 923.1,206.0 928.3,208.8 935.7,212.9 935.7,213.0 935.7,213.0 935.7,213.0 935.7,213.0 935.7,213.0 935.7,213.0 935.7,213.0 935.7,213.0 935.7,213.0 935.7,213.0 935.7,213.0 935.7,213.0 935.7,213.0 935.7,213.0 935.7,213.0 935.7,213.0 935.7,213.0 935.7,213.0 935.7,213.0 935.8,213.0 935.8,213.0 935.8,213.0 935.8,213.0 935.8,213.0 935.8,213.0 935.8,213.0 935.8,213.0 935.8,213.0 935.8,213.0 935.8,213.0 935.8,213.0 935.8,213.0 935.8,213.0 935.8,213.0 935.8,213.0 935.8,213.0 935.8,213.0 935.8,213.0 935.8,212.9 935.8,212.9 935.8,212.9 957.3,200.5 957.3,200.5 957.3,200.5 957.3,200.5 957.3,200.5 957.3,200.5 957.3,200.5 957.3,200.5 957.3,200.5 957.3,200.5 957.3,200.5 957.3,200.5 957.3,200.5 957.3,200.5 957.3,200.5 957.3,200.5 957.3,200.5 957.3,200.5 957.3,200.5 957.3,200.5 957.3,200.5 957.3,200.5 949.9,196.3 949.9,196.3 949.9,196.3 942.5,192.4 942.5,192.4 942.5,192.4 935.1,188.8 935.1,188.8 935.1,188.8 927.7,185.6 927.7,185.6 927.7,185.6 920.4,182.6 920.4,182.6 920.4,182.6 913.1,180.0 913.1,180.0 913.1,180.0 912.1,179.7 911.7,179.5 911.7,179.5 911.7,179.5 903.7,176.0 903.7,176.0 903.7,176.0 895.8,172.8 895.8,172.8 895.8,172.8 887.9,169.9 887.9,169.9 887.9,169.9 880.0,167.4 880.0,167.4 880.0,167.4 872.3,165.3 872.3,165.3 872.3,165.3 864.6,163.5 864.6,163.5 864.6,163.5 857.0,162.1 857.0,162.1 857.0,162.1 849.5,161.0 849.5,161.0 849.5,161.0 842.1,160.3 842.1,160.3 842.1,160.3 834.8,160.0 834.8,160.0 834.8,160.0 827.6,160.0 827.6,160.0 827.6,160.0 820.6,160.4 820.6,160.4 820.6,160.4 813.7,161.1 813.7,161.1 813.7,161.1 806.9,162.2 806.9,162.2 806.9,162.2 800.4,163.7 800.4,163.7 800.4,163.7 793.9,165.5 793.9,165.5 793.9,165.5 787.7,167.7 787.7,167.7 787.7,167.7 781.6,170.2 781.6,170.2 781.6,170.2 775.7,173.1 775.7,173.1 775.7,173.1 770.0,176.4 770.0,176.4 758.9,182.8 758.9,182.8 753.4,186.4 753.4,186.4 753.4,186.4 748.1,190.3 748.1,190.3 748.1,190.3 743.1,194.5 743.1,194.5 743.1,194.5 738.2,199.1 738.2,199.1 738.2,199.1 733.6,204.0 733.6,204.0 733.6,204.0 729.2,209.2 729.2,209.2 729.2,209.2 725.1,214.7 725.1,214.7 725.1,214.7 721.2,220.6 721.2,220.6 721.2,220.6 717.5,226.7 717.5,226.7 717.5,226.7 714.1,233.1 714.1,233.1"/></clipPath>
<g clip-path="url(#cband)">
<polygon points="714.1,233.1 714.1,233.1 711.0,239.8 711.0,239.8 711.0,239.8 708.1,246.7 708.1,246.7 708.1,246.7 705.5,254.0 705.5,254.0 705.5,254.0 703.2,261.5 703.2,261.5 703.2,261.5 701.1,269.2 701.1,269.2 701.1,269.2 699.3,277.2 699.3,277.2 699.3,277.2 697.7,285.4 697.7,285.4 697.7,285.4 696.5,293.8 696.5,293.8 696.5,293.8 695.5,302.4 695.5,302.4 695.5,302.4 694.8,311.2 694.8,311.2 694.8,311.2 694.4,320.2 694.4,320.2 694.4,320.2 694.2,329.4 694.2,329.4 694.2,329.4 694.4,338.7 694.4,338.8 694.4,338.8 694.8,348.2 694.8,348.2 694.8,348.2 695.5,357.9 695.5,357.9 695.5,357.9 696.5,367.7 696.5,367.7 696.5,367.7 697.7,377.5 697.7,377.5 697.7,377.5 699.3,387.5 699.3,387.5 699.3,387.5 701.1,397.6 701.1,397.6 701.1,397.6 703.1,407.8 703.1,407.8 703.1,407.8 705.5,418.0 705.5,418.0 705.5,418.0 708.1,428.3 708.1,428.3 708.1,428.3 711.0,438.6 711.0,438.6 711.0,438.6 714.1,449.0 714.1,449.0 714.1,449.0 717.5,459.4 717.5,459.4 717.5,459.4 721.2,469.7 721.2,469.7 721.2,469.7 725.1,480.1 725.1,480.1 725.1,480.1 729.2,490.5 729.2,490.5 729.2,490.5 733.6,500.8 733.6,500.8 733.6,500.8 738.2,511.1 738.2,511.1 738.2,511.1 743.1,521.3 743.1,521.3 743.1,521.3 748.1,531.5 748.1,531.5 748.1,531.5 753.4,541.5 753.4,541.5 753.4,541.5 758.9,551.5 758.9,551.5 758.9,551.5 764.6,561.4 764.6,561.4 764.6,561.4 770.4,571.1 770.4,571.1 770.4,571.1 776.5,580.8 776.5,580.8 776.5,580.8 782.8,590.2 782.8,590.2 782.8,590.2 789.2,599.6 789.2,599.6 789.2,599.6 795.8,608.7 795.8,608.7 795.8,608.7 802.5,617.7 802.5,617.7 802.5,617.7 809.4,626.5 809.4,626.5 809.4,626.5 816.4,635.1 816.4,635.1 816.4,635.1 823.6,643.5 823.6,643.5 823.6,643.5 830.9,651.7 830.9,651.7 830.9,651.7 838.3,659.6 838.3,659.6 838.3,659.6 845.8,667.3 845.8,667.3 845.8,667.3 853.4,674.8 853.4,674.8 853.4,674.8 861.1,682.0 861.1,682.0 861.1,682.0 868.8,688.9 868.8,688.9 868.8,688.9 876.7,695.6 876.7,695.6 876.7,695.6 884.6,701.9 884.6,701.9 884.6,701.9 892.5,708.0 892.5,708.0 892.5,708.0 900.5,713.8 900.5,713.8 900.5,713.8 908.5,719.3 908.5,719.3 908.5,719.3 916.5,724.5 916.5,724.5 916.5,724.5 924.6,729.3 924.6,729.3 924.6,729.3 924.6,729.3 924.6,729.3 924.6,729.3 924.6,729.3 924.6,729.3 924.6,729.3 924.6,729.3 924.6,729.3 924.6,729.3 935.8,722.9 935.8,722.9 935.8,722.9 935.8,722.9 935.8,722.9 935.8,722.9 935.8,722.9 935.8,722.9 935.8,722.9 935.8,722.9 935.8,722.9 935.8,722.9 935.8,722.9 935.8,722.9 935.8,722.9 935.8,722.9 935.8,722.9 935.8,722.9 935.8,722.9 935.8,722.9 935.8,722.9 935.8,722.9 935.8,722.9 935.8,722.9 935.8,722.9 935.8,722.9 935.8,722.9 935.8,722.9 935.8,722.9 935.8,722.9 935.8,722.9 935.8,722.9 935.8,722.9 935.8,722.9 935.8,722.9 935.8,722.9 935.8,722.9 935.8,722.9 935.8,722.9 935.8,722.9 935.8,722.9 935.8,722.9 935.8,722.9 935.8,702.1 957.3,689.7 957.3,689.7 957.3,689.7 957.3,689.7 957.3,689.7 957.3,689.7 957.3,689.7 957.3,689.7 957.3,689.7 957.3,689.7 957.3,689.7 957.3,689.7 957.3,689.7 957.3,689.7 957.3,689.7 957.3,689.7 957.3,689.7 957.3,689.7 957.3,689.7 957.3,689.7 957.3,689.7 957.3,689.7 949.9,685.2 942.5,680.4 935.1,675.4 927.7,670.0 920.4,664.4 913.1,658.5 905.9,652.4 898.8,646.0 891.7,639.4 884.7,632.5 877.8,625.4 870.9,618.1 864.2,610.5 857.6,602.8 851.1,594.9 844.8,586.8 838.6,578.5 832.5,570.1 826.6,561.5 820.8,552.7 815.2,543.9 809.8,534.9 804.6,525.8 799.5,516.6 794.7,507.3 790.0,497.9 785.5,488.5 781.3,479.0 777.2,469.5 773.4,460.0 769.8,450.4 766.5,440.8 763.3,431.3 760.4,421.7 757.8,412.2 755.4,402.7 753.2,393.3 751.3,383.9 749.6,374.6 748.2,365.4 747.1,356.3 746.2,347.3 745.5,338.4 745.1,329.7 745.0,321.1 745.1,312.6 745.5,304.3 746.2,296.2 747.1,288.3 748.2,280.5 749.6,273.0 751.3,265.6 753.2,258.5 755.4,251.6 757.8,244.9 760.4,238.5 763.3,232.3 766.5,226.4 769.8,220.8 773.4,215.4 777.2,210.3 781.3,205.5 785.5,201.0 790.0,196.8 794.6,192.9 796.2,191.8 799.3,190.5 805.1,188.5 811.0,186.8 817.0,185.4 823.2,184.4 829.6,183.7 836.1,183.4 842.7,183.3 849.4,183.7 856.2,184.3 863.1,185.3 870.1,186.6 877.2,188.2 884.4,190.2 884.4,190.2 891.6,192.5 898.9,195.1 901.6,196.2 906.2,198.1 913.5,201.3 920.9,204.9 923.1,206.0 928.3,208.8 935.7,212.9 935.7,213.0 935.7,213.0 935.7,213.0 935.7,213.0 935.7,213.0 935.7,213.0 935.7,213.0 935.7,213.0 935.7,213.0 935.7,213.0 935.7,213.0 935.7,213.0 935.7,213.0 935.7,213.0 935.7,213.0 935.7,213.0 935.7,213.0 935.7,213.0 935.7,213.0 935.8,213.0 935.8,213.0 935.8,213.0 935.8,213.0 935.8,213.0 935.8,213.0 935.8,213.0 935.8,213.0 935.8,213.0 935.8,213.0 935.8,213.0 935.8,213.0 935.8,213.0 935.8,213.0 935.8,213.0 935.8,213.0 935.8,213.0 935.8,213.0 935.8,213.0 935.8,212.9 935.8,212.9 935.8,212.9 957.3,200.5 957.3,200.5 957.3,200.5 957.3,200.5 957.3,200.5 957.3,200.5 957.3,200.5 957.3,200.5 957.3,200.5 957.3,200.5 957.3,200.5 957.3,200.5 957.3,200.5 957.3,200.5 957.3,200.5 957.3,200.5 957.3,200.5 957.3,200.5 957.3,200.5 957.3,200.5 957.3,200.5 957.3,200.5 949.9,196.3 949.9,196.3 949.9,196.3 942.5,192.4 942.5,192.4 942.5,192.4 935.1,188.8 935.1,188.8 935.1,188.8 927.7,185.6 927.7,185.6 927.7,185.6 920.4,182.6 920.4,182.6 920.4,182.6 913.1,180.0 913.1,180.0 913.1,180.0 912.1,179.7 911.7,179.5 911.7,179.5 911.7,179.5 903.7,176.0 903.7,176.0 903.7,176.0 895.8,172.8 895.8,172.8 895.8,172.8 887.9,169.9 887.9,169.9 887.9,169.9 880.0,167.4 880.0,167.4 880.0,167.4 872.3,165.3 872.3,165.3 872.3,165.3 864.6,163.5 864.6,163.5 864.6,163.5 857.0,162.1 857.0,162.1 857.0,162.1 849.5,161.0 849.5,161.0 849.5,161.0 842.1,160.3 842.1,160.3 842.1,160.3 834.8,160.0 834.8,160.0 834.8,160.0 827.6,160.0 827.6,160.0 827.6,160.0 820.6,160.4 820.6,160.4 820.6,160.4 813.7,161.1 813.7,161.1 813.7,161.1 806.9,162.2 806.9,162.2 806.9,162.2 800.4,163.7 800.4,163.7 800.4,163.7 793.9,165.5 793.9,165.5 793.9,165.5 787.7,167.7 787.7,167.7 787.7,167.7 781.6,170.2 781.6,170.2 781.6,170.2 775.7,173.1 775.7,173.1 775.7,173.1 770.0,176.4 770.0,176.4 758.9,182.8 758.9,182.8 753.4,186.4 753.4,186.4 753.4,186.4 748.1,190.3 748.1,190.3 748.1,190.3 743.1,194.5 743.1,194.5 743.1,194.5 738.2,199.1 738.2,199.1 738.2,199.1 733.6,204.0 733.6,204.0 733.6,204.0 729.2,209.2 729.2,209.2 729.2,209.2 725.1,214.7 725.1,214.7 725.1,214.7 721.2,220.6 721.2,220.6 721.2,220.6 717.5,226.7 717.5,226.7 717.5,226.7 714.1,233.1 714.1,233.1" fill="#b4635a" stroke="none" stroke-width="0" fill-opacity="0.95"/>
<polygon points="935.8,702.1 929.8,698.5 923.8,694.7 917.9,690.8 911.9,686.6 906.0,682.3 900.1,677.8 894.2,673.1 888.4,668.3 882.6,663.3 876.8,658.1 871.1,652.7 865.5,647.3 859.9,641.6 854.3,635.8 848.8,629.9 843.4,623.8 838.1,617.6 832.8,611.3 827.6,604.9 822.5,598.3 817.5,591.6 812.6,584.9 807.8,578.0 803.1,571.0 798.5,563.9 794.0,556.8 789.6,549.6 785.3,542.3 781.2,534.9 777.1,527.5 773.2,520.0 769.5,512.5 765.8,504.9 762.3,497.3 758.9,489.6 755.7,482.0 752.6,474.3 749.7,466.6 746.9,458.9 744.2,451.1 741.7,443.4 739.4,435.7 737.2,428.1 735.1,420.4 733.3,412.8 731.5,405.2 730.0,397.6 728.6,390.1 727.4,382.7 726.3,375.3 725.4,368.0 724.7,360.7 724.1,353.6 723.7,346.5 723.5,339.5 723.4,332.5 723.5,325.7 723.8,319.0 724.3,312.4 724.9,305.9 725.6,299.6 726.6,293.3 727.7,287.2 729.0,281.2 730.4,275.4 732.0,269.7 733.8,264.2 735.7,258.8 737.8,253.5 740.0,248.5 742.4,243.6 744.9,238.8 747.6,234.3 750.5,229.9 753.4,225.7 756.6,221.6 759.8,217.8 763.3,214.1 766.8,210.7 770.5,207.4 774.3,204.4 778.2,201.5 782.3,198.8 786.5,196.4 790.8,194.1 795.2,192.1 799.8,190.2 804.4,188.6 809.1,187.2 814.0,186.0 835.5,173.6 830.6,174.8 825.9,176.2 821.3,177.8 816.7,179.7 812.3,181.7 808.0,184.0 803.8,186.4 799.7,189.1 795.8,191.9 792.0,195.0 788.3,198.3 784.8,201.7 781.3,205.4 778.1,209.2 774.9,213.2 772.0,217.5 769.1,221.8 766.4,226.4 763.9,231.2 761.5,236.1 759.3,241.1 757.2,246.4 755.3,251.8 753.5,257.3 751.9,263.0 750.5,268.8 749.2,274.8 748.1,280.9 747.1,287.2 746.4,293.5 745.8,300.0 745.3,306.6 745.0,313.3 744.9,320.1 745.0,327.1 745.2,334.1 745.6,341.2 746.2,348.3 746.9,355.6 747.8,362.9 748.9,370.3 750.1,377.7 751.5,385.2 753.0,392.8 754.8,400.4 756.6,408.0 758.7,415.7 760.9,423.3 763.2,431.0 765.7,438.7 768.4,446.4 771.2,454.2 774.1,461.9 777.2,469.5 780.4,477.2 783.8,484.9 787.3,492.5 791.0,500.1 794.7,507.6 798.6,515.1 802.7,522.5 806.8,529.9 811.1,537.2 815.5,544.4 820.0,551.5 824.6,558.6 829.3,565.6 834.1,572.5 839.0,579.2 844.0,585.9 849.1,592.5 854.3,598.9 859.6,605.2 864.9,611.4 870.3,617.5 875.8,623.4 881.4,629.2 887.0,634.9 892.6,640.3 898.3,645.7 904.1,650.9 909.9,655.9 915.7,660.7 921.6,665.4 927.5,669.9 933.4,674.2 939.4,678.4 945.3,682.3 951.3,686.1 957.2,689.7" fill="#b9685f" stroke="none" stroke-width="0" />
<polygon points="937.6,703.2 959.1,690.8 954.0,687.8 932.5,700.2" fill="#686868" stroke="none" stroke-width="0" fill-opacity="0.92"/>
<polygon points="925.6,695.9 947.1,683.5 942.0,680.2 920.5,692.6" fill="#686868" stroke="none" stroke-width="0" fill-opacity="0.92"/>
<polygon points="913.6,687.8 935.1,675.4 930.0,671.8 908.5,684.2" fill="#686868" stroke="none" stroke-width="0" fill-opacity="0.92"/>
<polygon points="901.6,679.0 923.1,666.6 918.1,662.7 896.6,675.1" fill="#686868" stroke="none" stroke-width="0" fill-opacity="0.92"/>
<polygon points="889.8,669.5 911.3,657.1 906.4,652.9 884.9,665.3" fill="#686868" stroke="none" stroke-width="0" fill-opacity="0.92"/>
<polygon points="878.1,659.3 899.6,646.9 894.8,642.4 873.3,654.8" fill="#686868" stroke="none" stroke-width="0" fill-opacity="0.92"/>
<polygon points="866.6,648.4 888.1,636.0 883.4,631.3 861.9,643.7" fill="#686868" stroke="none" stroke-width="0" fill-opacity="0.92"/>
<polygon points="855.4,636.9 876.9,624.5 872.2,619.5 850.7,631.9" fill="#686868" stroke="none" stroke-width="0" fill-opacity="0.92"/>
<polygon points="844.3,624.9 865.8,612.5 861.3,607.3 839.8,619.7" fill="#686868" stroke="none" stroke-width="0" fill-opacity="0.92"/>
<polygon points="833.6,612.3 855.1,599.9 850.7,594.5 829.2,606.9" fill="#686868" stroke="none" stroke-width="0" fill-opacity="0.92"/>
<polygon points="823.2,599.2 844.7,586.8 840.5,581.2 819.0,593.6" fill="#686868" stroke="none" stroke-width="0" fill-opacity="0.92"/>
<polygon points="813.2,585.7 834.7,573.3 830.6,567.5 809.1,579.9" fill="#686868" stroke="none" stroke-width="0" fill-opacity="0.92"/>
<polygon points="803.6,571.7 825.1,559.3 821.2,553.4 799.7,565.8" fill="#686868" stroke="none" stroke-width="0" fill-opacity="0.92"/>
<polygon points="794.4,557.4 815.9,545.0 812.1,538.9 790.6,551.3" fill="#686868" stroke="none" stroke-width="0" fill-opacity="0.92"/>
<polygon points="785.6,542.8 807.1,530.4 803.6,524.1 782.1,536.5" fill="#686868" stroke="none" stroke-width="0" fill-opacity="0.92"/>
<polygon points="777.4,527.9 798.9,515.5 795.5,509.1 774.0,521.5" fill="#686868" stroke="none" stroke-width="0" fill-opacity="0.92"/>
<polygon points="769.6,512.7 791.1,500.3 788.0,493.9 766.5,506.3" fill="#686868" stroke="none" stroke-width="0" fill-opacity="0.92"/>
<polygon points="762.4,497.4 783.9,485.0 781.0,478.5 759.5,490.9" fill="#686868" stroke="none" stroke-width="0" fill-opacity="0.92"/>
<polygon points="755.7,482.0 777.2,469.5 774.6,463.0 753.1,475.4" fill="#686868" stroke="none" stroke-width="0" fill-opacity="0.92"/>
<polygon points="749.6,466.4 771.1,454.0 768.7,447.5 747.2,459.9" fill="#686868" stroke="none" stroke-width="0" fill-opacity="0.92"/>
<polygon points="744.1,450.9 765.6,438.5 763.5,431.9 742.0,444.3" fill="#686868" stroke="none" stroke-width="0" fill-opacity="0.92"/>
<polygon points="739.2,435.3 760.7,422.9 758.9,416.4 737.4,428.8" fill="#686868" stroke="none" stroke-width="0" fill-opacity="0.92"/>
<polygon points="735.0,419.9 756.5,407.5 754.9,401.0 733.4,413.4" fill="#686868" stroke="none" stroke-width="0" fill-opacity="0.92"/>
<polygon points="731.4,404.5 752.9,392.1 751.6,385.7 730.1,398.1" fill="#686868" stroke="none" stroke-width="0" fill-opacity="0.92"/>
<polygon points="728.5,389.4 750.0,377.0 748.9,370.7 727.4,383.1" fill="#686868" stroke="none" stroke-width="0" fill-opacity="0.92"/>
<polygon points="726.2,374.4 747.7,362.0 746.9,355.8 725.4,368.2" fill="#686868" stroke="none" stroke-width="0" fill-opacity="0.92"/>
<polygon points="724.6,359.7 746.1,347.3 745.6,341.3 724.1,353.7" fill="#686868" stroke="none" stroke-width="0" fill-opacity="0.92"/>
<polygon points="723.7,345.4 745.2,333.0 745.0,327.0 723.5,339.4" fill="#686868" stroke="none" stroke-width="0" fill-opacity="0.92"/>
<polygon points="723.4,331.4 744.9,319.0 745.0,313.2 723.5,325.6" fill="#686868" stroke="none" stroke-width="0" fill-opacity="0.92"/>
<polygon points="723.9,317.8 745.4,305.4 745.8,299.8 724.3,312.2" fill="#686868" stroke="none" stroke-width="0" fill-opacity="0.92"/>
<polygon points="725.0,304.6 746.5,292.2 747.2,286.8 725.7,299.2" fill="#686868" stroke="none" stroke-width="0" fill-opacity="0.92"/>
<polygon points="726.8,291.9 748.3,279.5 749.3,274.4 727.8,286.8" fill="#686868" stroke="none" stroke-width="0" fill-opacity="0.92"/>
<polygon points="729.3,279.8 750.8,267.4 752.0,262.5 730.5,274.9" fill="#686868" stroke="none" stroke-width="0" fill-opacity="0.92"/>
<polygon points="732.4,268.3 753.9,255.9 755.5,251.2 734.0,263.6" fill="#686868" stroke="none" stroke-width="0" fill-opacity="0.92"/>
<polygon points="736.2,257.3 757.7,244.9 759.5,240.5 738.0,252.9" fill="#686868" stroke="none" stroke-width="0" fill-opacity="0.92"/>
<polygon points="740.7,247.0 762.2,234.6 764.2,230.5 742.7,242.9" fill="#686868" stroke="none" stroke-width="0" fill-opacity="0.92"/>
<polygon points="745.7,237.4 767.2,225.0 769.6,221.1 748.1,233.5" fill="#686868" stroke="none" stroke-width="0" fill-opacity="0.92"/>
<polygon points="751.4,228.5 772.9,216.1 775.5,212.5 754.0,224.9" fill="#686868" stroke="none" stroke-width="0" fill-opacity="0.92"/>
<polygon points="757.7,220.3 779.2,207.9 782.0,204.7 760.5,217.1" fill="#686868" stroke="none" stroke-width="0" fill-opacity="0.92"/>
<polygon points="764.5,212.9 786.0,200.5 789.1,197.6 767.6,210.0" fill="#686868" stroke="none" stroke-width="0" fill-opacity="0.92"/>
<polygon points="771.9,206.2 793.4,193.8 796.7,191.3 775.2,203.7" fill="#686868" stroke="none" stroke-width="0" fill-opacity="0.92"/>
<polygon points="779.8,200.4 801.3,188.0 804.8,185.8 783.3,198.2" fill="#686868" stroke="none" stroke-width="0" fill-opacity="0.92"/>
<polygon points="788.3,195.4 809.8,183.0 813.4,181.2 791.9,193.6" fill="#686868" stroke="none" stroke-width="0" fill-opacity="0.92"/>
<polygon points="797.2,191.3 818.7,178.8 822.5,177.4 801.0,189.8" fill="#686868" stroke="none" stroke-width="0" fill-opacity="0.92"/>
<polygon points="935.8,711.1 935.7,714.8 920.0,705.0 914.5,699.4 921.6,702.3" fill="#686868" stroke="none" stroke-width="0" fill-opacity="0.92"/>
<polygon points="904.3,681.0 902.1,700.4 887.4,688.7 878.5,670.4 885.1,665.5" fill="#686868" stroke="none" stroke-width="0" fill-opacity="0.92"/>
<polygon points="863.5,654.9 861.1,656.4 844.9,639.5 839.8,631.7 848.1,638.9" fill="#686868" stroke="none" stroke-width="0" fill-opacity="0.92"/>
<polygon points="838.7,618.4 833.2,635.2 818.1,616.9 814.9,600.5 827.0,604.1" fill="#686868" stroke="none" stroke-width="0" fill-opacity="0.92"/>
<polygon points="811.0,582.5 799.3,591.6 788.4,575.3 789.3,563.2 797.4,562.2" fill="#686868" stroke="none" stroke-width="0" fill-opacity="0.92"/>
<polygon points="787.5,546.0 778.6,554.2 769.9,539.0 770.5,527.6 779.1,531.2" fill="#686868" stroke="none" stroke-width="0" fill-opacity="0.92"/>
<polygon points="765.8,519.5 755.9,518.1 746.5,498.2 745.3,484.7 749.8,484.7" fill="#686868" stroke="none" stroke-width="0" fill-opacity="0.92"/>
<polygon points="748.7,463.9 732.9,464.8 727.9,450.5 735.5,449.2 744.8,453.0" fill="#686868" stroke="none" stroke-width="0" fill-opacity="0.92"/>
<polygon points="737.1,441.0 729.3,445.2 721.8,419.4 723.7,408.5 728.7,410.1" fill="#686868" stroke="none" stroke-width="0" fill-opacity="0.92"/>
<polygon points="729.1,392.9 712.7,393.4 709.5,374.9 717.5,372.6 726.9,379.5" fill="#686868" stroke="none" stroke-width="0" fill-opacity="0.92"/>
<polygon points="724.6,360.0 706.8,352.7 705.8,339.1 714.6,337.3 723.7,346.5" fill="#686868" stroke="none" stroke-width="0" fill-opacity="0.92"/>
<polygon points="719.3,320.4 705.5,314.9 706.1,302.9 713.3,303.1 720.0,308.6" fill="#686868" stroke="none" stroke-width="0" fill-opacity="0.92"/>
<polygon points="726.0,297.3 708.1,284.3 709.4,276.2 719.6,276.4 728.0,285.8" fill="#686868" stroke="none" stroke-width="0" fill-opacity="0.92"/>
<polygon points="732.1,269.4 714.0,256.1 719.7,239.3 729.9,243.7 735.6,258.9" fill="#686868" stroke="none" stroke-width="0" fill-opacity="0.92"/>
<polygon points="742.0,244.3 733.2,230.7 738.0,222.3 748.2,220.3 750.0,230.5" fill="#686868" stroke="none" stroke-width="0" fill-opacity="0.92"/>
<polygon points="759.6,218.0 745.9,196.4 750.8,191.3 762.9,197.3 768.4,209.3" fill="#686868" stroke="none" stroke-width="0" fill-opacity="0.92"/>
<polygon points="771.7,192.6 769.9,188.2 781.6,181.2 789.1,180.2 783.3,185.5" fill="#686868" stroke="none" stroke-width="0" fill-opacity="0.92"/>
<polygon points="799.9,190.2 791.1,176.9 814.4,170.6 822.0,177.0 820.6,184.7" fill="#686868" stroke="none" stroke-width="0" fill-opacity="0.92"/>
<polygon points="832.5,183.5 821.4,160.4 833.9,160.0 841.7,171.8 844.7,183.4" fill="#686868" stroke="none" stroke-width="0" fill-opacity="0.92"/>
<polygon points="924.6,729.3 918.8,725.8 913.0,722.2 907.2,718.4 901.4,714.4 895.6,710.3 889.9,706.0 884.2,701.5 878.5,697.0 872.8,692.2 867.1,687.3 861.5,682.3 856.0,677.2 850.5,671.9 845.0,666.4 839.6,660.9 834.2,655.2 828.9,649.4 823.6,643.5 818.4,637.4 813.3,631.3 808.3,625.0 803.3,618.7 798.4,612.2 793.6,605.7 788.9,599.0 784.2,592.3 779.7,585.5 775.2,578.6 770.8,571.7 766.5,564.6 762.4,557.5 758.3,550.4 754.3,543.2 750.5,535.9 746.7,528.6 743.1,521.3 739.6,513.9 736.2,506.5 732.9,499.1 729.7,491.6 726.7,484.1 723.8,476.6 721.0,469.2 718.4,461.7 715.9,454.2 713.5,446.7 711.2,439.2 709.1,431.7 707.1,424.3 705.3,416.8 703.6,409.5 702.0,402.1 700.6,394.8 699.3,387.5 698.2,380.3 697.2,373.1 696.3,366.0 695.6,359.0 695.1,352.0 694.7,345.1 694.4,338.2 694.3,331.5 694.3,324.8 694.5,318.2 694.8,311.7 695.3,305.3 695.9,299.0 696.6,292.8 697.5,286.8 698.6,280.8 699.8,274.9 701.1,269.2 702.6,263.6 704.2,258.1 706.0,252.8 707.9,247.6 709.9,242.5 712.1,237.5 714.4,232.7 716.8,228.1 719.4,223.6 722.1,219.3 724.9,215.1 727.9,211.0 730.9,207.2 734.2,203.5 737.5,199.9 740.9,196.6 744.5,193.3 748.2,190.3 759.3,183.9 755.6,186.9 752.1,190.1 748.6,193.5 745.3,197.0 742.1,200.7 739.0,204.6 736.1,208.6 733.2,212.8 730.5,217.2 728.0,221.7 725.5,226.3 723.2,231.1 721.0,236.0 719.0,241.1 717.1,246.3 715.4,251.7 713.7,257.2 712.3,262.8 710.9,268.5 709.7,274.4 708.7,280.3 707.8,286.4 707.0,292.6 706.4,298.9 706.0,305.3 705.6,311.8 705.5,318.4 705.4,325.0 705.6,331.8 705.8,338.6 706.2,345.5 706.8,352.5 707.5,359.6 708.3,366.7 709.3,373.9 710.5,381.1 711.7,388.4 713.2,395.7 714.7,403.0 716.4,410.4 718.3,417.8 720.2,425.3 722.4,432.7 724.6,440.2 727.0,447.7 729.5,455.2 732.2,462.7 735.0,470.2 737.9,477.7 740.9,485.2 744.1,492.6 747.3,500.1 750.7,507.5 754.3,514.9 757.9,522.2 761.6,529.5 765.5,536.8 769.4,544.0 773.5,551.1 777.7,558.2 782.0,565.2 786.3,572.2 790.8,579.1 795.4,585.9 800.0,592.6 804.7,599.2 809.6,605.8 814.5,612.2 819.4,618.6 824.5,624.8 829.6,631.0 834.8,637.0 840.0,642.9 845.3,648.8 850.7,654.4 856.1,660.0 861.6,665.4 867.1,670.7 872.7,675.9 878.3,680.9 883.9,685.8 889.6,690.5 895.3,695.1 901.0,699.6 906.8,703.8 912.6,708.0 918.3,711.9 924.1,715.7 929.9,719.4 935.8,722.9" fill="#6a696a" stroke="none" stroke-width="0" fill-opacity="0.97"/>
<polygon points="924.6,729.3 935.8,722.9 931.0,720.0 919.9,726.5" fill="#b65a4f" stroke="none" stroke-width="0" />
<polygon points="912.1,721.6 923.3,715.2 918.6,712.1 907.4,718.5" fill="#b65a4f" stroke="none" stroke-width="0" />
<polygon points="899.7,713.2 910.9,706.8 906.2,703.4 895.0,709.8" fill="#b65a4f" stroke="none" stroke-width="0" />
<polygon points="887.4,704.1 898.5,697.6 893.9,694.0 882.7,700.4" fill="#b65a4f" stroke="none" stroke-width="0" />
<polygon points="875.1,694.2 886.3,687.8 881.7,683.9 870.5,690.3" fill="#b65a4f" stroke="none" stroke-width="0" />
<polygon points="863.0,683.7 874.2,677.3 869.6,673.1 858.5,679.5" fill="#b65a4f" stroke="none" stroke-width="0" />
<polygon points="851.1,672.5 862.3,666.1 857.8,661.7 846.7,668.1" fill="#b65a4f" stroke="none" stroke-width="0" />
<polygon points="839.4,660.7 850.6,654.3 846.2,649.7 835.1,656.1" fill="#b65a4f" stroke="none" stroke-width="0" />
<polygon points="828.0,648.4 839.1,642.0 834.9,637.1 823.7,643.5" fill="#b65a4f" stroke="none" stroke-width="0" />
<polygon points="816.8,635.5 828.0,629.1 823.8,624.0 812.7,630.5" fill="#b65a4f" stroke="none" stroke-width="0" />
<polygon points="806.0,622.1 817.1,615.7 813.1,610.5 801.9,616.9" fill="#b65a4f" stroke="none" stroke-width="0" />
<polygon points="795.5,608.2 806.6,601.8 802.7,596.4 791.6,602.9" fill="#b65a4f" stroke="none" stroke-width="0" />
<polygon points="785.3,594.0 796.5,587.5 792.8,582.0 781.6,588.4" fill="#b65a4f" stroke="none" stroke-width="0" />
<polygon points="775.6,579.3 786.8,572.9 783.2,567.2 772.0,573.6" fill="#b65a4f" stroke="none" stroke-width="0" />
<polygon points="766.3,564.3 777.5,557.9 774.1,552.1 762.9,558.5" fill="#b65a4f" stroke="none" stroke-width="0" />
<polygon points="757.5,549.0 768.7,542.6 765.5,536.7 754.3,543.1" fill="#b65a4f" stroke="none" stroke-width="0" />
<polygon points="749.2,533.5 760.3,527.0 757.3,521.1 746.2,527.5" fill="#b65a4f" stroke="none" stroke-width="0" />
<polygon points="741.4,517.7 752.5,511.3 749.7,505.3 738.6,511.7" fill="#b65a4f" stroke="none" stroke-width="0" />
<polygon points="734.1,501.8 745.3,495.4 742.6,489.3 731.5,495.7" fill="#b65a4f" stroke="none" stroke-width="0" />
<polygon points="727.4,485.8 738.5,479.4 736.1,473.3 725.0,479.7" fill="#b65a4f" stroke="none" stroke-width="0" />
<polygon points="721.2,469.7 732.4,463.3 730.2,457.2 719.1,463.6" fill="#b65a4f" stroke="none" stroke-width="0" />
<polygon points="715.7,453.6 726.8,447.2 724.9,441.1 713.7,447.5" fill="#b65a4f" stroke="none" stroke-width="0" />
<polygon points="710.7,437.6 721.9,431.1 720.2,425.0 709.0,431.5" fill="#b65a4f" stroke="none" stroke-width="0" />
<polygon points="706.4,421.6 717.6,415.1 716.1,409.1 705.0,415.5" fill="#b65a4f" stroke="none" stroke-width="0" />
<polygon points="702.8,405.7 713.9,399.3 712.7,393.3 701.5,399.7" fill="#b65a4f" stroke="none" stroke-width="0" />
<polygon points="699.7,390.0 710.9,383.6 709.9,377.7 698.8,384.1" fill="#b65a4f" stroke="none" stroke-width="0" />
<polygon points="697.4,374.6 708.5,368.1 707.8,362.3 696.6,368.7" fill="#b65a4f" stroke="none" stroke-width="0" />
<polygon points="695.7,359.3 706.8,352.9 706.3,347.2 695.2,353.6" fill="#b65a4f" stroke="none" stroke-width="0" />
<polygon points="694.6,344.4 705.8,338.0 705.6,332.4 694.4,338.9" fill="#b65a4f" stroke="none" stroke-width="0" />
<polygon points="694.3,329.9 705.4,323.4 705.5,318.0 694.3,324.4" fill="#b65a4f" stroke="none" stroke-width="0" />
<polygon points="694.6,315.7 705.7,309.3 706.0,304.0 694.9,310.4" fill="#b65a4f" stroke="none" stroke-width="0" />
<polygon points="695.6,302.0 706.7,295.5 707.3,290.4 696.1,296.9" fill="#b65a4f" stroke="none" stroke-width="0" />
<polygon points="697.2,288.7 708.4,282.3 709.2,277.4 698.0,283.8" fill="#b65a4f" stroke="none" stroke-width="0" />
<polygon points="699.6,276.0 710.7,269.5 711.8,264.8 700.6,271.3" fill="#b65a4f" stroke="none" stroke-width="0" />
<polygon points="702.5,263.8 713.7,257.3 715.0,252.9 703.9,259.3" fill="#b65a4f" stroke="none" stroke-width="0" />
<polygon points="706.2,252.2 717.3,245.7 718.9,241.5 707.7,247.9" fill="#b65a4f" stroke="none" stroke-width="0" />
<polygon points="710.5,241.2 721.6,234.7 723.4,230.7 712.2,237.2" fill="#b65a4f" stroke="none" stroke-width="0" />
<polygon points="715.3,230.8 726.5,224.4 728.5,220.6 717.4,227.1" fill="#b65a4f" stroke="none" stroke-width="0" />
<polygon points="720.9,221.2 732.0,214.7 734.3,211.3 723.1,217.7" fill="#b65a4f" stroke="none" stroke-width="0" />
<polygon points="727.0,212.2 738.1,205.8 740.6,202.6 729.4,209.0" fill="#b65a4f" stroke="none" stroke-width="0" />
<polygon points="733.7,204.0 744.8,197.6 747.5,194.7 736.3,201.1" fill="#b65a4f" stroke="none" stroke-width="0" />
<polygon points="740.9,196.6 752.0,190.1 754.9,187.5 743.8,194.0" fill="#b65a4f" stroke="none" stroke-width="0" />
<polygon points="750.8,188.3 761.9,181.9 774.1,195.4 787.4,187.6 778.7,171.7 767.5,178.1" fill="#686868" stroke="none" stroke-width="0" fill-opacity="0.92"/>
<polygon points="782.8,172.0 793.9,165.6 804.8,180.9 818.9,177.9 812.0,161.4 800.8,167.9" fill="#686868" stroke="none" stroke-width="0" fill-opacity="0.92"/>
<polygon points="816.5,166.5 827.6,160.1 837.0,176.5 847.3,176.9 842.1,160.4 830.9,166.8" fill="#686868" stroke="none" stroke-width="0" fill-opacity="0.92"/>
<polygon points="830.9,166.8 842.1,160.4 847.6,160.9 836.5,167.3" fill="#3f7f95" stroke="none" stroke-width="0" fill-opacity="0.9"/>
<polygon points="836.5,167.3 847.6,160.9 853.2,161.6 842.1,168.0" fill="#7d7576" stroke="none" stroke-width="0" fill-opacity="0.9"/>
<polygon points="842.1,168.0 853.2,161.6 858.9,162.5 847.7,168.9" fill="#3f7f95" stroke="none" stroke-width="0" fill-opacity="0.9"/>
<polygon points="847.7,168.9 858.9,162.5 864.6,163.6 853.4,170.0" fill="#7d7576" stroke="none" stroke-width="0" fill-opacity="0.9"/>
<polygon points="853.4,170.0 864.6,163.6 870.3,164.9 859.2,171.3" fill="#3f7f95" stroke="none" stroke-width="0" fill-opacity="0.9"/>
<polygon points="859.2,171.3 870.3,164.9 876.1,166.4 865.0,172.8" fill="#7d7576" stroke="none" stroke-width="0" fill-opacity="0.9"/>
<polygon points="865.0,172.8 876.1,166.4 882.0,168.1 870.8,174.5" fill="#3f7f95" stroke="none" stroke-width="0" fill-opacity="0.9"/>
<polygon points="870.8,174.5 882.0,168.1 887.9,170.0 876.7,176.4" fill="#7d7576" stroke="none" stroke-width="0" fill-opacity="0.9"/>
<polygon points="876.7,176.4 887.9,170.0 893.8,172.1 882.6,178.5" fill="#3f7f95" stroke="none" stroke-width="0" fill-opacity="0.9"/>
<polygon points="882.6,178.5 893.8,172.1 899.7,174.4 888.6,180.8" fill="#7d7576" stroke="none" stroke-width="0" fill-opacity="0.9"/>
<polygon points="888.6,180.8 899.7,174.4 905.7,176.9 894.5,183.3" fill="#3f7f95" stroke="none" stroke-width="0" fill-opacity="0.9"/>
<polygon points="894.5,183.3 905.7,176.9 911.7,179.5 900.5,186.0" fill="#7d7576" stroke="none" stroke-width="0" fill-opacity="0.9"/>
<polygon points="900.5,186.0 911.7,179.5 917.7,182.4 906.5,188.9" fill="#3f7f95" stroke="none" stroke-width="0" fill-opacity="0.9"/>
<polygon points="906.5,188.9 917.7,182.4 923.7,185.5 912.5,191.9" fill="#7d7576" stroke="none" stroke-width="0" fill-opacity="0.9"/>
<polygon points="912.5,191.9 923.7,185.5 929.7,188.7 918.6,195.2" fill="#3f7f95" stroke="none" stroke-width="0" fill-opacity="0.9"/>
<polygon points="918.6,195.2 929.7,188.7 935.8,192.2 924.6,198.6" fill="#7d7576" stroke="none" stroke-width="0" fill-opacity="0.9"/>
<polygon points="792.5,169.4 794.4,169.0 796.4,168.6 798.3,168.3 800.3,167.9 802.3,167.7 804.3,167.4 806.3,167.2 808.3,167.0 810.3,166.8 812.4,166.7 814.4,166.6 816.5,166.5 818.5,166.4 820.6,166.4 822.7,166.5 824.8,166.5 827.0,166.6 829.1,166.7 831.2,166.8 833.4,167.0 835.5,167.2 837.7,167.4 839.9,167.7 842.1,168.0 844.3,168.3 846.5,168.7 848.7,169.1 850.9,169.5 853.1,169.9 855.3,170.4 857.6,170.9 859.8,171.5 862.1,172.0 864.3,172.6 866.6,173.3 868.9,173.9 871.2,174.6 873.4,175.3 875.7,176.1 878.0,176.9 880.3,177.7 882.6,178.5 884.9,179.4 887.2,180.3 889.6,181.2 891.9,182.2 894.2,183.2 896.5,184.2 898.9,185.2 901.2,186.3 903.5,187.4 905.9,188.5 908.2,189.7 910.5,190.9 912.9,192.1 915.2,193.3 917.6,194.6 919.9,195.9 922.3,197.2 924.6,198.6 935.8,212.9 933.6,211.7 931.4,210.4 929.3,209.2 927.1,208.1 924.9,206.9 922.8,205.8 920.6,204.7 918.5,203.6 916.3,202.6 914.2,201.6 912.0,200.6 909.9,199.6 907.7,198.7 905.6,197.8 903.5,196.9 901.3,196.0 899.2,195.2 897.1,194.4 894.9,193.6 892.8,192.9 890.7,192.2 888.6,191.5 886.5,190.8 884.4,190.2 882.3,189.6 880.2,189.0 878.1,188.4 876.0,187.9 874.0,187.4 871.9,186.9 869.8,186.5 867.8,186.1 865.8,185.7 863.7,185.3 861.7,185.0 859.7,184.7 857.6,184.4 855.6,184.2 853.6,184.0 851.7,183.8 849.7,183.6 847.7,183.5 845.7,183.4 843.8,183.3 841.8,183.3 839.9,183.3 838.0,183.3 836.1,183.3 834.2,183.4 832.3,183.5 830.4,183.6 828.5,183.8 826.7,183.9 824.8,184.2 823.0,184.4 821.2,184.7 819.3,185.0 817.5,185.3 815.7,185.6 814.0,186.0" fill="#b5625b" stroke="none" stroke-width="0" />
<linearGradient id="gmute" gradientUnits="userSpaceOnUse" x1="740" y1="0" x2="800" y2="0"><stop offset="0" stop-color="#3a4148" stop-opacity="0"/><stop offset="1" stop-color="#3a4148" stop-opacity="0.26"/></linearGradient>
<rect x="740" y="150" width="220" height="75" fill="url(#gmute)"/>
</g>
<polygon points="919.5,196.3 924.6,198.6 935.8,192.2 935.8,212.9 919.5,205.2" fill="#5f6163" stroke="none" stroke-width="0" />
<polyline points="935.8,702.1 924.6,695.3 913.6,687.8 902.5,679.7 891.6,671.0 880.8,661.7 870.1,651.8 859.7,641.4 849.4,630.5 839.4,619.1 829.6,607.3 820.1,595.1 811.0,582.5 802.1,569.6 793.7,556.3 785.6,542.8 778.0,529.0 770.8,515.1 764.0,500.9 757.7,486.7 751.9,472.4 746.6,458.1 741.8,443.7 737.5,429.4 733.8,415.1 730.7,401.0 728.1,387.1 726.1,373.3 724.6,359.7 723.7,346.5 723.4,333.5 723.7,320.9 724.6,308.6 726.1,296.8 728.1,285.3 730.7,274.4 733.8,264.0 737.5,254.1 741.8,244.7 746.6,236.0 751.9,227.8 757.7,220.3 764.0,213.4 770.8,207.2 778.0,201.7 785.6,196.9 793.7,192.8 802.1,189.4 811.0,186.7 820.1,184.8 829.6,183.7 839.4,183.3 849.4,183.6 859.7,184.7 870.1,186.6 880.8,189.1 891.6,192.5 902.5,196.5 913.6,201.3 924.6,206.8 935.8,212.9" fill="none" stroke="#e9aaa3" stroke-width="1.0" stroke-linejoin="round" stroke-linecap="round" stroke-opacity="0.85"/>
<polyline points="957.2,689.7 949.2,684.8 941.2,679.6 933.2,674.1 925.3,668.2 917.3,662.0 909.5,655.5 901.7,648.7 894.0,641.6 886.4,634.3 878.9,626.6 871.5,618.7 864.2,610.6 857.0,602.2 850.0,593.6 843.2,584.8 836.5,575.7 830.0,566.5 823.6,557.1 817.5,547.6 811.6,537.9 805.8,528.1 800.3,518.1 795.0,508.1 789.9,498.0 785.1,487.8 780.5,477.5 776.2,467.2 772.2,456.8 768.4,446.4 764.8,436.1 761.6,425.7 758.6,415.4 755.9,405.1 753.5,394.9 751.4,384.7 749.6,374.7 748.1,364.7 746.8,354.8 745.9,345.1 745.3,335.5 745.0,326.1 745.0,316.8 745.3,307.8 745.9,298.9 746.8,290.2 748.0,281.8 749.4,273.6 751.2,265.6 753.3,257.9 755.7,250.4 758.4,243.3 761.3,236.4 764.6,229.8 768.1,223.6 771.9,217.6 775.9,212.0 780.2,206.7 784.8,201.7 789.6,197.1 794.6,192.9" fill="none" stroke="#e9aaa3" stroke-width="1.0" stroke-linejoin="round" stroke-linecap="round" stroke-opacity="0.8"/>
<polyline points="935.8,722.9 923.7,715.5 911.7,707.3 899.7,698.5 887.9,689.1 876.1,679.0 864.6,668.3 853.2,657.0 842.1,645.2 831.2,632.9 820.6,620.0 810.3,606.8 800.4,593.1 790.8,579.1 781.6,564.7 772.9,550.0 764.6,535.1 756.8,519.9 749.4,504.6 742.6,489.2 736.3,473.7 730.5,458.1 725.3,442.5 720.7,427.0 716.7,411.6 713.3,396.2 710.5,381.1 708.3,366.1 706.7,351.4 705.7,337.0 705.4,323.0 705.7,309.3 706.7,296.0 708.3,283.1 710.5,270.7 713.3,258.9 716.7,247.6 720.7,236.8 725.3,226.7 730.5,217.2 736.3,208.3 742.6,200.2 749.4,192.7 756.8,186.0 764.6,180.0 772.9,174.7 781.6,170.3 790.8,166.6 800.4,163.8 810.3,161.7 820.6,160.4 831.2,160.0 842.1,160.4 853.2,161.6 864.6,163.6 876.1,166.4 887.9,170.0 899.7,174.4 911.7,179.5 923.7,185.5 935.8,192.2" fill="none" stroke="#e9aaa3" stroke-width="1.0" stroke-linejoin="round" stroke-linecap="round" stroke-opacity="0.9"/>
<polyline points="924.6,729.3 912.5,721.9 900.5,713.8 888.6,705.0 876.7,695.5 865.0,685.4 853.4,674.7 842.1,663.5 830.9,651.6 820.0,639.3 809.4,626.5 799.2,613.2 789.2,599.5 779.7,585.5 770.5,571.1 761.7,556.4 753.4,541.5 745.6,526.4 738.3,511.1 731.4,495.6 725.1,480.1 719.4,464.5 714.2,449.0 709.6,433.4 705.5,418.0 702.1,402.7 699.3,387.5 697.1,372.6 695.5,357.9 694.6,343.5 694.3,329.4 694.6,315.7 695.5,302.4 697.1,289.6 699.3,277.2 702.1,265.3 705.5,254.0 709.6,243.2 714.2,233.1 719.4,223.6 725.1,214.8 731.4,206.6 738.3,199.1 745.6,192.4 753.4,186.4 761.7,181.2 770.5,176.7 779.7,173.1 789.2,170.2 799.2,168.1 809.4,166.9 820.0,166.4 830.9,166.8 842.1,168.0 853.4,170.0 865.0,172.8 876.7,176.4 888.6,180.8 900.5,186.0 912.5,191.9 924.6,198.6" fill="none" stroke="#aedcf8" stroke-width="1.4" stroke-linejoin="round" stroke-linecap="round" />
<polyline points="754.3,188.1 756.4,186.2 758.6,184.4 760.9,182.7 763.2,181.0 765.5,179.4 767.9,177.8 770.3,176.3 772.7,174.9 775.2,173.5 777.7,172.2 780.2,170.9 782.8,169.8 785.5,168.6 788.1,167.6 790.8,166.6 793.5,165.7 796.3,164.9 799.1,164.1 801.9,163.4 804.7,162.7 807.6,162.2 810.5,161.7 813.5,161.2 816.4,160.8 819.4,160.5 822.4,160.3 825.5,160.1 828.6,160.0 831.7,160.0 834.8,160.0 837.9,160.1 841.1,160.3 844.3,160.6 847.5,160.9 850.7,161.2 854.0,161.7 857.2,162.2 860.5,162.8 863.8,163.4 867.1,164.1 870.5,164.9 873.8,165.8 877.2,166.7 880.5,167.6 883.9,168.7 887.3,169.8 890.8,171.0 894.2,172.2 897.6,173.5 901.0,174.9 904.5,176.4 907.9,177.9 911.4,179.4 914.9,181.1 918.3,182.7 921.8,184.5 925.3,186.3 928.8,188.2 932.3,190.2 935.8,192.2 957.2,200.5" fill="none" stroke="#bfe4f8" stroke-width="1.2" stroke-linejoin="round" stroke-linecap="round" />
<polyline points="910.1,713.3 900.4,706.5 890.8,699.2 881.3,691.5 871.9,683.4 862.5,674.8 853.3,665.9 844.2,656.7 835.3,647.1 826.5,637.1 817.9,626.9 809.5,616.3 801.4,605.5 793.4,594.4 785.7,583.1 778.3,571.5 771.1,559.8 764.3,547.9 757.7,535.8 751.4,523.6 745.4,511.3 739.8,498.9 734.5,486.4 729.5,473.9 725.0,461.3 720.7,448.8 716.9,436.3 713.4,423.8 710.3,411.4 707.6,399.0 705.3,386.8 703.4,374.7 701.9,362.8 700.8,351.0 700.1,339.5 699.9,328.1 700.0,317.0 700.5,306.2 701.5,295.6 702.8,285.3 704.6,275.3 706.8,265.7 709.3,256.4 712.3,247.4 715.6,238.9 719.4,230.7 723.5,223.0 727.9,215.6 732.7,208.7 737.9,202.3 743.4,196.3 749.3,190.8 755.5,185.8 762.0,181.2 768.7,177.2 775.8,173.6 783.2,170.6 790.8,168.1 798.6,166.1 806.7,164.6 815.0,163.7" fill="none" stroke="#2f6f8a" stroke-width="0.7" stroke-linejoin="round" stroke-linecap="round" stroke-opacity="0.7"/>
<polyline points="924.6,198.6 935.8,192.2 935.8,212.9 957.2,200.5" fill="none" stroke="#bfe4f8" stroke-width="1.3" stroke-linejoin="round" stroke-linecap="round" />
<polyline points="924.6,729.3 935.8,722.9 935.8,702.1 957.2,689.7" fill="none" stroke="#bfe4f8" stroke-width="1.3" stroke-linejoin="round" stroke-linecap="round" />
<polygon points="935.8,192.2 957.2,200.5 935.8,212.9" fill="#4a8fa9" stroke="#bfe4f8" stroke-width="1.2" />
<polygon points="744.5,414.5 759.3,412.0 762.7,418.8 762.7,427.0 748.0,424.5" fill="#b9d4e6" stroke="#4c8fb0" stroke-width="0.7" fill-opacity="0.25" stroke-opacity="0.7"/>
</svg>
<div class="card" style="left:9px;top:9px;width:244px;height:528px;"></div>
<div class="card" style="left:9px;top:543px;width:244px;height:34px;"></div>
<div class="hl" style="left:9px;top:45px;width:244px;background:#e3e3e3"></div>
<div class="abs" style="left:9px;top:165px;width:244px;height:26px;background:#e1eff7;border-top:1px solid #b9d9ea;border-bottom:1px solid #b9d9ea;"></div>
<div class="vl" style="left:27px;top:82px;height:8px"></div>
<div class="vl" style="left:51px;top:108px;height:408px"></div>
<div class="hl" style="left:51px;top:123px;width:5px"></div>
<div class="hl" style="left:51px;top:207px;width:5px"></div>
<div class="hl" style="left:51px;top:235px;width:5px"></div>
<div class="hl" style="left:51px;top:263px;width:5px"></div>
<div class="hl" style="left:51px;top:291px;width:5px"></div>
<div class="hl" style="left:51px;top:319px;width:5px"></div>
<div class="hl" style="left:51px;top:375px;width:5px"></div>
<div class="hl" style="left:51px;top:403px;width:5px"></div>
<div class="hl" style="left:51px;top:431px;width:5px"></div>
<div class="hl" style="left:51px;top:515px;width:5px"></div>
<div class="vl" style="left:75px;top:166px;height:13px;background:#c4c4c4"></div>
<div class="hl" style="left:75px;top:179px;width:5px;background:#c4c4c4"></div>
<div class="exp" style="left:22px;top:90px"></div>
<div class="exp" style="left:46px;top:146px"></div>
<div class="exp p" style="left:46px;top:342px"></div>
<div class="exp p" style="left:46px;top:454px"></div>
<div class="exp p" style="left:46px;top:482px"></div>
<div class="plus" style="left:226px;top:20.0px"></div>
<div class="plus" style="left:226px;top:56.0px"></div>
<div class="plus" style="left:226px;top:144.0px"></div>
<div class="plus" style="left:226px;top:200.0px"></div>
<div class="plus" style="left:226px;top:228.0px"></div>
<div class="plus" style="left:226px;top:312.0px"></div>
<div class="plus" style="left:226px;top:368.0px"></div>
<div class="plus" style="left:226px;top:508.0px"></div>
<div class="ok" style="left:69px;top:145px"><svg width="12" height="12" viewBox="0 0 12 12"><path d="M3.2 6.2 L5.2 8.1 L8.8 4.3" fill="none" stroke="#fff" stroke-width="1.8" stroke-linecap="round" stroke-linejoin="round"/></svg></div>
<div class="ok" style="left:69px;top:201px"><svg width="12" height="12" viewBox="0 0 12 12"><path d="M3.2 6.2 L5.2 8.1 L8.8 4.3" fill="none" stroke="#fff" stroke-width="1.8" stroke-linecap="round" stroke-linejoin="round"/></svg></div>
<div class="ok" style="left:69px;top:229px"><svg width="12" height="12" viewBox="0 0 12 12"><path d="M3.2 6.2 L5.2 8.1 L8.8 4.3" fill="none" stroke="#fff" stroke-width="1.8" stroke-linecap="round" stroke-linejoin="round"/></svg></div>
<div class="ok" style="left:69px;top:257px"><svg width="12" height="12" viewBox="0 0 12 12"><path d="M3.2 6.2 L5.2 8.1 L8.8 4.3" fill="none" stroke="#fff" stroke-width="1.8" stroke-linecap="round" stroke-linejoin="round"/></svg></div>
<div class="ok" style="left:69px;top:285px"><svg width="12" height="12" viewBox="0 0 12 12"><path d="M3.2 6.2 L5.2 8.1 L8.8 4.3" fill="none" stroke="#fff" stroke-width="1.8" stroke-linecap="round" stroke-linejoin="round"/></svg></div>
<div class="ok" style="left:69px;top:341px"><svg width="12" height="12" viewBox="0 0 12 12"><path d="M3.2 6.2 L5.2 8.1 L8.8 4.3" fill="none" stroke="#fff" stroke-width="1.8" stroke-linecap="round" stroke-linejoin="round"/></svg></div>
<div class="ok" style="left:69px;top:397px"><svg width="12" height="12" viewBox="0 0 12 12"><path d="M3.2 6.2 L5.2 8.1 L8.8 4.3" fill="none" stroke="#fff" stroke-width="1.8" stroke-linecap="round" stroke-linejoin="round"/></svg></div>
<div class="ok" style="left:69px;top:425px"><svg width="12" height="12" viewBox="0 0 12 12"><path d="M3.2 6.2 L5.2 8.1 L8.8 4.3" fill="none" stroke="#fff" stroke-width="1.8" stroke-linecap="round" stroke-linejoin="round"/></svg></div>
<div class="ring" style="left:69.2px;top:313.2px"></div>
<div class="ring" style="left:69.2px;top:369.2px"></div>
<div class="ring" style="left:69.2px;top:509.2px"></div>
<svg class="abs" style="left:20px;top:19px" width="14" height="16" viewBox="0 0 14 16"><path d="M4.9 3.6 L9.2 7.9 L4.9 12.2" fill="none" stroke="#4a4a4a" stroke-width="1.2"/></svg>
<svg class="abs" style="left:19px;top:56px" width="16" height="14" viewBox="0 0 16 14"><path d="M3.5 4.9 L8 9.4 L12.5 4.9" fill="none" stroke="#4a4a4a" stroke-width="1.2"/></svg>
<svg class="abs" style="left:43.3px;top:19.5px" width="16" height="16" viewBox="0 0 16 16"><polygon points="7.60,0.70 11.20,2.68 7.60,4.66 4.00,2.68" fill="#e3e3e3"/><polygon points="4.00,2.68 7.60,4.66 7.60,8.44 4.00,6.46" fill="#a9a9a9"/><polygon points="11.20,2.68 7.60,4.66 7.60,8.44 11.20,6.46" fill="#cfcfcf"/><polygon points="4.00,6.40 7.60,8.38 4.00,10.36 0.40,8.38" fill="#e3e3e3"/><polygon points="0.40,8.38 4.00,10.36 4.00,14.14 0.40,12.16" fill="#a9a9a9"/><polygon points="7.60,8.38 4.00,10.36 4.00,14.14 7.60,12.16" fill="#cfcfcf"/><polygon points="11.20,6.40 14.80,8.38 11.20,10.36 7.60,8.38" fill="#e3e3e3"/><polygon points="7.60,8.38 11.20,10.36 11.20,14.14 7.60,12.16" fill="#a9a9a9"/><polygon points="14.80,8.38 11.20,10.36 11.20,14.14 14.80,12.16" fill="#cfcfcf"/></svg>
<svg class="abs" style="left:43.3px;top:55.5px" width="16" height="16" viewBox="0 0 16 16"><polygon points="7.60,0.70 11.20,2.68 7.60,4.66 4.00,2.68" fill="#c7cf4a"/><polygon points="4.00,2.68 7.60,4.66 7.60,8.44 4.00,6.46" fill="#1f7ab5"/><polygon points="11.20,2.68 7.60,4.66 7.60,8.44 11.20,6.46" fill="#bcc640"/><polygon points="4.00,6.40 7.60,8.38 4.00,10.36 0.40,8.38" fill="#c7cf4a"/><polygon points="0.40,8.38 4.00,10.36 4.00,14.14 0.40,12.16" fill="#1f7ab5"/><polygon points="7.60,8.38 4.00,10.36 4.00,14.14 7.60,12.16" fill="#bcc640"/><polygon points="11.20,6.40 14.80,8.38 11.20,10.36 7.60,8.38" fill="#c7cf4a"/><polygon points="7.60,8.38 11.20,10.36 11.20,14.14 7.60,12.16" fill="#1f7ab5"/><polygon points="14.80,8.38 11.20,10.36 11.20,14.14 14.80,12.16" fill="#bcc640"/></svg>
<svg class="abs" style="left:42px;top:87px" width="18" height="16" viewBox="0 0 18 16"><path d="M1.2 8 H6.8 M4.7 5.9 L6.9 8 L4.7 10.1" fill="none" stroke="#8a8a8a" stroke-width="1.1"/><rect x="10" y="2.4" width="6" height="11.2" fill="#fdfdfd" stroke="#84988c" stroke-width="1.2"/></svg>
<svg class="abs" style="left:68px;top:115px" width="20" height="20" viewBox="0 0 20 20"><polygon points="8.40,0.80 12.20,2.89 8.40,4.98 4.60,2.89" fill="#e3e3e3"/><polygon points="4.60,2.89 8.40,4.98 8.40,8.97 4.60,6.88" fill="#a9a9a9"/><polygon points="12.20,2.89 8.40,4.98 8.40,8.97 12.20,6.88" fill="#cfcfcf"/><polygon points="4.80,5.60 8.60,7.69 4.80,9.78 1.00,7.69" fill="#e3e3e3"/><polygon points="1.00,7.69 4.80,9.78 4.80,13.77 1.00,11.68" fill="#a9a9a9"/><polygon points="8.60,7.69 4.80,9.78 4.80,13.77 8.60,11.68" fill="#cfcfcf"/><rect x="6.2" y="6.8" width="5.6" height="5.5" fill="#bdbdbd"/><circle cx="14.6" cy="15.3" r="4.3" fill="#0f8042"/><path d="M12.4 15.4 L14 16.9 L16.8 13.9" fill="none" stroke="#fff" stroke-width="1.4" stroke-linecap="round" stroke-linejoin="round"/></svg>
<svg class="abs" style="left:91px;top:171px" width="22" height="22" viewBox="0 0 22 22"><rect x="1.7" y="1.8" width="8.6" height="8.6" fill="#f4f7f9" stroke="#a3a6a9" stroke-width="1"/><rect x="5.7" y="5.8" width="8.6" height="8.6" fill="#f4f7f9" fill-opacity="0.6" stroke="#a3a6a9" stroke-width="1"/><rect x="6.2" y="6.3" width="4.1" height="4.1" fill="#a9abad"/><circle cx="15.4" cy="15.4" r="4.3" fill="#0f8042"/><path d="M13.2 15.5 L14.8 17 L17.6 14" fill="none" stroke="#fff" stroke-width="1.4" stroke-linecap="round" stroke-linejoin="round"/></svg>
<svg class="abs" style="left:68px;top:478px" width="22" height="22" viewBox="0 0 22 22"><g fill="none" stroke="#333" stroke-width="0.9" stroke-linejoin="round"><path d="M5 4.4 L8.4 2.4 L12 3.6 L12 11.6 L5.6 15.8 L1.4 14.2 L1.4 9 L5 7.6 Z"/><path d="M5 4.4 L8.4 5.6 L12 3.6 M8.4 5.6 L8.4 10 M5 7.6 L5 4.4 M1.4 9 L5 10.2 L8.4 8.4 M5 10.2 L5.6 15.8 M8.4 10 L12 11.6"/></g><circle cx="14.4" cy="16.5" r="3.1" fill="#fff" stroke="#0c7dbd" stroke-width="2.6"/></svg>
<div class="abs grip" style="left:256px;top:286px;width:1px;height:16px;background:#c6cdce"></div>
<div class="abs" style="left:259px;top:286px;width:1px;height:16px;background:#c6cdce"></div>
<div class="card" style="left:263px;top:9px;width:348px;height:482px;"></div>
<div class="hl" style="left:263px;top:53px;width:348px;background:#e3e3e3"></div>
<div class="hl" style="left:263px;top:442px;width:348px;background:#e3e3e3"></div>
<div class="abs" style="left:536px;top:15px;width:32px;height:32px;border-radius:4px;background:#0072a7;"><svg width="32" height="32" viewBox="0 0 32 32"><path d="M10.5 16.5 L14.2 20 L21.5 12.2" fill="none" stroke="#fff" stroke-width="1.4" stroke-linecap="round" stroke-linejoin="round"/></svg></div>
<div class="btn" style="left:572px;top:15px;"><svg width="30" height="30" viewBox="0 0 30 30"><path d="M11 11 L19 19 M19 11 L11 19" fill="none" stroke="#555" stroke-width="1.1"/></svg></div>
<div class="ul" style="left:465px;top:93px;width:134px"></div>
<div class="ul" style="left:465px;top:129px;width:134px"></div>
<div class="ul" style="left:465px;top:165px;width:91px"></div>
<div class="ul" style="left:568px;top:165px;width:31px"></div>
<svg class="abs" style="left:586px;top:74px" width="10" height="8" viewBox="0 0 10 8"><path d="M1.6 2 L5 5.4 L8.4 2" fill="none" stroke="#666" stroke-width="1"/></svg>
<svg class="abs" style="left:586px;top:110px" width="10" height="8" viewBox="0 0 10 8"><path d="M1.6 2 L5 5.4 L8.4 2" fill="none" stroke="#666" stroke-width="1"/></svg>
<svg class="abs" style="left:586px;top:147px" width="10" height="8" viewBox="0 0 10 8"><path d="M1.6 2 L5 5.4 L8.4 2" fill="none" stroke="#666" stroke-width="1"/></svg>
<div class="abs" style="left:275px;top:202px;width:321px;height:79px;border:1px solid #22a8dc;border-left-width:2px;background:#e9f6fc;"></div>
<div class="abs" style="left:275px;top:352.4px;width:322px;height:78.6px;border:1px solid #f6c5d0;background:#fff;"></div>
<div class="btn" style="left:571px;top:290px;width:26px;height:26px;"><svg width="26" height="26" viewBox="0 0 26 26"><path d="M10 18 V8.5 M7.2 11.2 L10 8.3 L12.8 11.2 M16 8 V17.5 M13.2 14.8 L16 17.7 L18.8 14.8" fill="none" stroke="#222" stroke-width="1.3"/></svg></div>
<div class="btn" style="left:273px;top:451px;"><svg width="30" height="30" viewBox="0 0 30 30"><g fill="none" stroke="#5a5352" stroke-width="1.1"><path d="M9.2 10.9 H20.8"/><path d="M12.9 10.7 C12.9 8.6 17.1 8.6 17.1 10.7"/><path d="M10.2 11 V20.2 C10.2 21.4 10.9 22 12 22 H18 C19.1 22 19.8 21.4 19.8 20.2 V11"/><path d="M12.7 13.6 V19.4 M15 13.6 V19.4 M17.4 13.6 V19.4"/></g></svg></div>
<div class="btn" style="left:309px;top:451px;"><svg width="30" height="30" viewBox="0 0 30 30"><g fill="none" stroke="#5a5352" stroke-width="1.1"><path d="M9.4 12 H20.6 M17.6 9 L20.7 12 L17.6 15"/><path d="M20.6 18.9 H9.4 M12.4 15.9 L9.3 18.9 L12.4 21.9"/></g></svg></div>
<div class="xc" style="left:575px;top:212.0px"><svg width="13" height="13" viewBox="0 0 13 13"><path d="M4.2 4.2 L8.8 8.8 M8.8 4.2 L4.2 8.8" fill="none" stroke="#444" stroke-width="1.1"/></svg></div>
<div class="xc" style="left:575px;top:236.0px"><svg width="13" height="13" viewBox="0 0 13 13"><path d="M4.2 4.2 L8.8 8.8 M8.8 4.2 L4.2 8.8" fill="none" stroke="#444" stroke-width="1.1"/></svg></div>
<div class="xc" style="left:575px;top:260.0px"><svg width="13" height="13" viewBox="0 0 13 13"><path d="M4.2 4.2 L8.8 8.8 M8.8 4.2 L4.2 8.8" fill="none" stroke="#444" stroke-width="1.1"/></svg></div>
<div class="xc" style="left:575px;top:362.0px"><svg width="13" height="13" viewBox="0 0 13 13"><path d="M4.2 4.2 L8.8 8.8 M8.8 4.2 L4.2 8.8" fill="none" stroke="#444" stroke-width="1.1"/></svg></div>
<div class="xc" style="left:575px;top:386.0px"><svg width="13" height="13" viewBox="0 0 13 13"><path d="M4.2 4.2 L8.8 8.8 M8.8 4.2 L4.2 8.8" fill="none" stroke="#444" stroke-width="1.1"/></svg></div>
<div class="xc" style="left:575px;top:410.0px"><svg width="13" height="13" viewBox="0 0 13 13"><path d="M4.2 4.2 L8.8 8.8 M8.8 4.2 L4.2 8.8" fill="none" stroke="#444" stroke-width="1.1"/></svg></div>
<div class="abs" style="left:1040px;top:12px;width:37px;height:37px;border:1px solid #b7daee;border-radius:5px;background:#fbfbfb;"></div>
<div class="abs" style="left:1170px;top:12px;width:37px;height:37px;border:1px solid #b7daee;border-radius:5px;background:#fbfbfb;"></div>
<div class="abs" style="left:952px;top:12px;width:1px;height:38px;background:#efefef"></div>
<div class="abs" style="left:996px;top:12px;width:1px;height:38px;background:#ededed"></div>
<svg class="abs" style="left:950px;top:10px" width="225" height="45" viewBox="950 10 225 45"><polygon points="972.50,24.30 979.00,28.10 972.50,31.90 966.00,28.10" fill="#ececec"/><polygon points="966.00,28.10 972.50,31.90 972.50,39.50 966.00,35.70" fill="#98989b"/><polygon points="979.00,28.10 979.00,35.70 972.50,39.50 972.50,31.90" fill="#d6d8d7"/><polygon points="972.50,24.30 979.00,28.10 979.00,35.70 972.50,39.50 966.00,35.70 966.00,28.10" fill="none" stroke="#6f6f72" stroke-width="0.8" stroke-linejoin="round"/><path d="M966.00,28.10 L972.50,31.90 L979.00,28.10 M972.50,31.90 L972.50,39.50" fill="none" stroke="#6f6f72" stroke-width="0.8"/><path d="M982.4 44.2 H985.8 V41.4" fill="none" stroke="#8f8f8f" stroke-width="1"/><polygon points="1015.80,24.70 1022.10,28.35 1015.80,32.00 1009.50,28.35" fill="#d4eaf8"/><polygon points="1009.50,28.35 1015.80,32.00 1015.80,39.30 1009.50,35.65" fill="#b3dbf5"/><polygon points="1022.10,28.35 1022.10,35.65 1015.80,39.30 1015.80,32.00" fill="#c7e3f6"/><polygon points="1015.80,24.70 1022.10,28.35 1022.10,35.65 1015.80,39.30 1009.50,35.65 1009.50,28.35" fill="none" stroke="#9a9fa3" stroke-width="0.9" stroke-linejoin="round"/><path d="M1009.50,28.35 L1015.80,32.00 L1022.10,28.35 M1015.80,32.00 L1015.80,39.30" fill="none" stroke="#9a9fa3" stroke-width="0.9"/><circle cx="1015.80" cy="24.70" r="1.3" fill="#8d9499"/><circle cx="1022.10" cy="28.35" r="1.3" fill="#8d9499"/><circle cx="1022.10" cy="35.65" r="1.3" fill="#8d9499"/><circle cx="1015.80" cy="39.30" r="1.3" fill="#8d9499"/><circle cx="1009.50" cy="35.65" r="1.3" fill="#8d9499"/><circle cx="1009.50" cy="28.35" r="1.3" fill="#8d9499"/><circle cx="1015.80" cy="32.00" r="1.3" fill="#8d9499"/><polygon points="1058.90,24.70 1065.10,28.35 1058.90,32.00 1052.70,28.35" fill="#ffffff"/><polygon points="1052.70,28.35 1058.90,32.00 1058.90,39.30 1052.70,35.65" fill="#1d9ad6"/><polygon points="1065.10,28.35 1065.10,35.65 1058.90,39.30 1058.90,32.00" fill="#ffffff"/><polygon points="1058.90,24.70 1065.10,28.35 1065.10,35.65 1058.90,39.30 1052.70,35.65 1052.70,28.35" fill="none" stroke="#111111" stroke-width="1.3" stroke-linejoin="round"/><path d="M1052.70,28.35 L1058.90,32.00 L1065.10,28.35 M1058.90,32.00 L1058.90,39.30" fill="none" stroke="#111111" stroke-width="1.3"/><circle cx="1058.90" cy="24.70" r="1.5" fill="#111111"/><circle cx="1065.10" cy="28.35" r="1.5" fill="#111111"/><circle cx="1065.10" cy="35.65" r="1.5" fill="#111111"/><circle cx="1058.90" cy="39.30" r="1.5" fill="#111111"/><circle cx="1052.70" cy="35.65" r="1.5" fill="#111111"/><circle cx="1052.70" cy="28.35" r="1.5" fill="#111111"/><polygon points="1101.90,24.70 1108.20,28.35 1101.90,32.00 1095.60,28.35" fill="none"/><polygon points="1095.60,28.35 1101.90,32.00 1101.90,39.30 1095.60,35.65" fill="none"/><polygon points="1108.20,28.35 1108.20,35.65 1101.90,39.30 1101.90,32.00" fill="none"/><polygon points="1101.90,24.70 1108.20,28.35 1108.20,35.65 1101.90,39.30 1095.60,35.65 1095.60,28.35" fill="none" stroke="#9fd0ee" stroke-width="0.9" stroke-linejoin="round" stroke-dasharray="1.5 1.2"/><path d="M1095.60,28.35 L1101.90,32.00 L1108.20,28.35 M1101.90,32.00 L1101.90,39.30" fill="none" stroke="#9fd0ee" stroke-width="0.9" stroke-dasharray="1.5 1.2"/><circle cx="1101.90" cy="24.70" r="1.3" fill="#8d9499"/><circle cx="1108.20" cy="28.35" r="1.3" fill="#8d9499"/><circle cx="1108.20" cy="35.65" r="1.3" fill="#8d9499"/><circle cx="1101.90" cy="39.30" r="1.3" fill="#8d9499"/><circle cx="1095.60" cy="35.65" r="1.3" fill="#8d9499"/><circle cx="1095.60" cy="28.35" r="1.3" fill="#8d9499"/><circle cx="1101.90" cy="32.00" r="1.3" fill="#8d9499"/><polygon points="1145.00,24.70 1151.30,28.35 1145.00,32.00 1138.70,28.35" fill="none"/><polygon points="1138.70,28.35 1145.00,32.00 1145.00,39.30 1138.70,35.65" fill="none"/><polygon points="1151.30,28.35 1151.30,35.65 1145.00,39.30 1145.00,32.00" fill="none"/><polygon points="1145.00,24.70 1151.30,28.35 1151.30,35.65 1145.00,39.30 1138.70,35.65 1138.70,28.35" fill="none" stroke="#a9adb0" stroke-width="0.9" stroke-linejoin="round"/><path d="M1138.70,28.35 L1145.00,32.00 L1151.30,28.35 M1145.00,32.00 L1145.00,39.30" fill="none" stroke="#a9adb0" stroke-width="0.9"/><circle cx="1145.00" cy="24.70" r="1.3" fill="#a5d6f5"/><circle cx="1138.70" cy="35.65" r="1.3" fill="#a5d6f5"/><circle cx="1151.30" cy="35.65" r="1.3" fill="#a5d6f5"/><circle cx="1145.00" cy="39.30" r="1.3" fill="#a5d6f5"/></svg>
<div class="abs" style="left:886px;top:868.6px;width:148px;height:2px;background:#2d343c"></div>
<div class="abs" style="left:886px;top:867px;width:1.2px;height:3.4px;background:#2d343c"></div>
<div class="abs" style="left:1032.8px;top:867px;width:1.2px;height:3.4px;background:#2d343c"></div>
<!-- text -->
<span class="t" style="left:65.2px;top:19.89px;font-size:13.6px;font-weight:400;color:#2d343c;transform:scaleX(0.8916)">GEOMETRIES (2)</span>
<span class="t" style="left:65.2px;top:55.89px;font-size:13.6px;font-weight:400;color:#2d343c;transform:scaleX(0.9458)">SIMULATIONS</span>
<span class="t" style="left:65.2px;top:87.89px;font-size:13.6px;font-weight:400;color:#2d343c;transform:scaleX(0.9500)">Static</span>
<span class="t" style="left:89.3px;top:115.89px;font-size:13.6px;font-weight:400;color:#2d343c;transform:scaleX(0.9634)">Geometry</span>
<span class="t" style="left:89.3px;top:143.89px;font-size:13.6px;font-weight:400;color:#2d343c;transform:scaleX(0.9449)">Contacts</span>
<span class="t" style="left:113.4px;top:171.89px;font-size:13.6px;font-weight:400;color:#2d343c;transform:scaleX(0.9189)">Bonded 1</span>
<span class="t" style="left:89.3px;top:199.89px;font-size:13.6px;font-weight:400;color:#2d343c;transform:scaleX(0.9129)">Physical contacts (0)</span>
<span class="t" style="left:89.3px;top:227.89px;font-size:13.6px;font-weight:400;color:#2d343c;transform:scaleX(0.9299)">Connectors (0)</span>
<span class="t" style="left:89.3px;top:255.89px;font-size:13.6px;font-weight:400;color:#2d343c;transform:scaleX(0.9405)">Element technology</span>
<span class="t" style="left:89.1px;top:283.89px;font-size:13.6px;font-weight:400;color:#2d343c;transform:scaleX(0.9505)">Model</span>
<span class="t" style="left:89.1px;top:311.89px;font-size:13.6px;font-weight:400;color:#2d343c;transform:scaleX(0.9663)">Materials</span>
<span class="t" style="left:89.1px;top:339.89px;font-size:13.6px;font-weight:400;color:#2d343c;transform:scaleX(0.9655)">Initial conditions</span>
<span class="t" style="left:88.9px;top:367.89px;font-size:13.6px;font-weight:400;color:#2d343c;transform:scaleX(0.9457)">Boundary conditions</span>
<span class="t" style="left:88.9px;top:395.89px;font-size:13.6px;font-weight:400;color:#2d343c;transform:scaleX(0.9407)">Numerics</span>
<span class="t" style="left:89.0px;top:423.89px;font-size:13.6px;font-weight:400;color:#2d343c;transform:scaleX(0.9607)">Simulation control</span>
<span class="t" style="left:64.7px;top:451.89px;font-size:13.6px;font-weight:400;color:#2d343c;transform:scaleX(0.9494)">Result control</span>
<span class="t" style="left:88.9px;top:479.89px;font-size:13.6px;font-weight:400;color:#2d343c;transform:scaleX(0.9263)">Mesh</span>
<span class="t" style="left:89.0px;top:507.89px;font-size:13.6px;font-weight:400;color:#2d343c;transform:scaleX(0.9244)">Simulation Runs</span>
<span class="t" style="left:19.6px;top:552.90px;font-size:15px;font-weight:700;color:#2d343c;transform:scaleX(0.8905)">Job status</span>
<span class="t" style="left:279.0px;top:24.46px;font-size:16px;font-weight:700;color:#2d343c;transform:scaleX(0.8506)">Bonded 1</span>
<span class="t" style="left:274.8px;top:70.89px;font-size:13.6px;font-weight:400;color:#2d343c;transform:scaleX(0.9368)">Connections</span>
<span class="t" style="left:469.1px;top:70.89px;font-size:13.6px;font-weight:400;color:#2d343c;transform:scaleX(0.9280)">Bonded</span>
<span class="t" style="left:274.8px;top:106.89px;font-size:13.6px;font-weight:400;color:#2d343c;transform:scaleX(0.9467)">Position tolerance</span>
<span class="t" style="left:469.1px;top:106.89px;font-size:13.6px;font-weight:400;color:#2d343c;transform:scaleX(0.8997)">Set value</span>
<span class="t" style="left:274.8px;top:142.89px;font-size:13.6px;font-weight:400;color:#2d343c;transform:scaleX(0.9245)">Tolerance</span>
<span class="t" style="left:469.1px;top:143.39px;font-size:13.6px;font-weight:400;color:#2d343c;transform:scaleX(0.9521)">0.001</span>
<span class="t" style="left:572.4px;top:142.89px;font-size:13.6px;font-weight:400;color:#2d343c;transform:scaleX(0.8916)">m</span>
<span class="t" style="left:274.8px;top:178.89px;font-size:13.6px;font-weight:700;color:#2d343c;transform:scaleX(0.8876)">Master assignment</span>
<span class="t" style="left:389.8px;top:178.89px;font-size:13.6px;font-weight:400;color:#2d343c;transform:scaleX(0.8722)">(3)</span>
<span class="t" style="left:556.6px;top:180.24px;font-size:12px;font-weight:400;color:#0f73a8;transform:scaleX(0.9039)">Clear list</span>
<span class="t" style="left:285.2px;top:211.89px;font-size:13.6px;font-weight:400;color:#2d343c;transform:scaleX(0.9090)">face 4842@Rim</span>
<span class="t" style="left:285.2px;top:235.89px;font-size:13.6px;font-weight:400;color:#2d343c;transform:scaleX(0.9090)">face 4850@Rim</span>
<span class="t" style="left:285.2px;top:259.89px;font-size:13.6px;font-weight:400;color:#2d343c;transform:scaleX(0.8927)">face 57@Rim</span>
<span class="t" style="left:274.8px;top:296.89px;font-size:13.6px;font-weight:400;color:#2d343c;transform:scaleX(0.9187)">Swap positions</span>
<span class="t" style="left:274.8px;top:328.89px;font-size:13.6px;font-weight:700;color:#2d343c;transform:scaleX(0.8577)">Slave assignment</span>
<span class="t" style="left:378.7px;top:328.89px;font-size:13.6px;font-weight:400;color:#2d343c;transform:scaleX(0.8602)">(3)</span>
<span class="t" style="left:556.6px;top:330.24px;font-size:12px;font-weight:400;color:#0f73a8;transform:scaleX(0.9039)">Clear list</span>
<span class="t" style="left:285.2px;top:361.89px;font-size:13.6px;font-weight:400;color:#2d343c;transform:scaleX(0.9372)">face 669@Mount and Tire</span>
<span class="t" style="left:285.2px;top:385.89px;font-size:13.6px;font-weight:400;color:#2d343c;transform:scaleX(0.9372)">face 661@Mount and Tire</span>
<span class="t" style="left:285.2px;top:409.89px;font-size:13.6px;font-weight:400;color:#2d343c;transform:scaleX(0.9337)">face 34@Mount and Tire</span>
<span class="t" style="left:940.8px;top:878.40px;font-size:13px;font-weight:400;color:#3a4047;transform:scaleX(0.9560)">0.05 m</span>
</body>
</html>
